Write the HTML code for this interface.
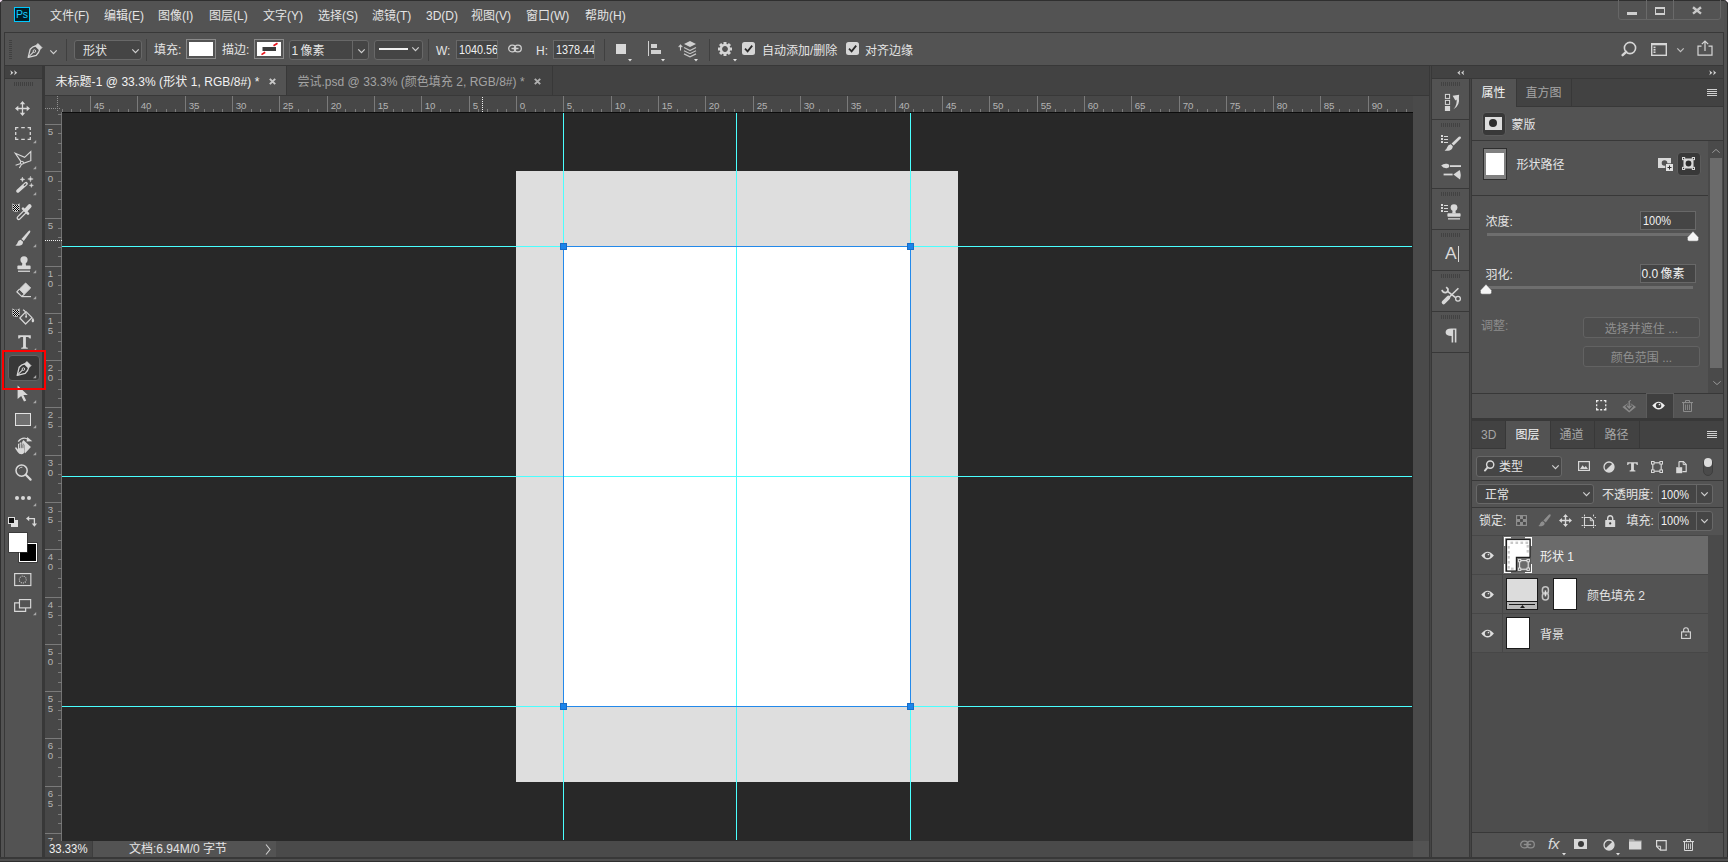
<!DOCTYPE html>
<html lang="zh-CN"><head><meta charset="utf-8"><title>Photoshop</title>
<style>
html,body{margin:0;padding:0;}
body{width:1728px;height:862px;overflow:hidden;background:#535353;position:relative;
 font-family:"Liberation Sans","Noto Sans CJK SC",sans-serif;font-size:12px;color:#e4e4e4;}
div,svg{position:absolute;box-sizing:border-box;}
svg{overflow:visible;display:block;}
.t{white-space:nowrap;}
</style></head><body>

<div style="left:0px;top:0px;width:1728px;height:1px;background:#2f2f2f;"></div>
<div style="left:0px;top:0px;width:1px;height:862px;background:#2f2f2f;"></div>
<div style="left:1723px;top:32px;width:1px;height:830px;background:#383838;"></div>
<div style="left:1724px;top:0px;width:3px;height:862px;background:#515151;"></div>
<div style="left:1727px;top:0px;width:1px;height:862px;background:#2f2f2f;"></div>
<div style="left:0px;top:857px;width:1728px;height:2px;background:#383838;"></div>
<div style="left:0px;top:859px;width:1728px;height:2px;background:#4f4f4f;"></div>
<div style="left:0px;top:861px;width:1728px;height:1px;background:#2f2f2f;"></div>
<div style="left:4px;top:32px;width:1px;height:826px;background:#383838;"></div>
<svg style="left:1723px;top:0px;" width="5" height="5" viewBox="0 0 5 5"><path d="M1 0 H5 V4 Z" fill="#2a2a2a"/><path d="M2.2 0 H5 V2.8 Z" fill="#fdf6fd"/></svg>
<svg style="left:0px;top:0px;" width="4" height="4" viewBox="0 0 4 4"><path d="M0 0 H2.6 L0 2.6 Z" fill="#f0dcf0"/></svg>
<div style="left:14px;top:7px;width:16px;height:15px;background:#001d26;border:1px solid #00c8ff;"></div>
<div class="t" style="left:14px;top:7px;width:16px;height:15px;line-height:15px;text-align:center;font-size:10.5px;font-weight:normal;color:#19cfff;letter-spacing:-0.2px;">Ps</div>
<div class="t" style="left:50px;top:7.5px;height:16px;line-height:16px;font-size:12px;color:#e4e4e4;">文件(F)</div>
<div class="t" style="left:104px;top:7.5px;height:16px;line-height:16px;font-size:12px;color:#e4e4e4;">编辑(E)</div>
<div class="t" style="left:158px;top:7.5px;height:16px;line-height:16px;font-size:12px;color:#e4e4e4;">图像(I)</div>
<div class="t" style="left:209px;top:7.5px;height:16px;line-height:16px;font-size:12px;color:#e4e4e4;">图层(L)</div>
<div class="t" style="left:263px;top:7.5px;height:16px;line-height:16px;font-size:12px;color:#e4e4e4;">文字(Y)</div>
<div class="t" style="left:318px;top:7.5px;height:16px;line-height:16px;font-size:12px;color:#e4e4e4;">选择(S)</div>
<div class="t" style="left:372px;top:7.5px;height:16px;line-height:16px;font-size:12px;color:#e4e4e4;">滤镜(T)</div>
<div class="t" style="left:426px;top:7.5px;height:16px;line-height:16px;font-size:12px;color:#e4e4e4;">3D(D)</div>
<div class="t" style="left:471px;top:7.5px;height:16px;line-height:16px;font-size:12px;color:#e4e4e4;">视图(V)</div>
<div class="t" style="left:526px;top:7.5px;height:16px;line-height:16px;font-size:12px;color:#e4e4e4;">窗口(W)</div>
<div class="t" style="left:585px;top:7.5px;height:16px;line-height:16px;font-size:12px;color:#e4e4e4;">帮助(H)</div>
<div style="left:1618px;top:-3px;width:103px;height:23px;border:1px solid #666;border-radius:3px;"></div>
<div style="left:1646px;top:0px;width:1px;height:19px;background:#6a6a6a;"></div>
<div style="left:1673px;top:0px;width:1px;height:19px;background:#6a6a6a;"></div>
<div style="left:1627px;top:12px;width:10px;height:3px;background:#cfcfcf;"></div>
<div style="left:1655px;top:7px;width:10px;height:8px;border:1.5px solid #cfcfcf;border-top-width:2px;border-bottom-width:2px;"></div>
<svg style="left:1692px;top:5.6px;" width="10" height="9" viewBox="0 0 10 9"><path d="M1 1.2 L9 7.6 M9 1.2 L1 7.6" stroke="#c8c8c8" stroke-width="2.4" fill="none"/></svg>
<div style="left:4px;top:32px;width:1720px;height:34px;background:#535353;border:1px solid #383838;"></div>
<div style="left:9px;top:40px;width:3px;height:1px;background:#404040;"></div>
<div style="left:9px;top:42px;width:3px;height:1px;background:#404040;"></div>
<div style="left:9px;top:44px;width:3px;height:1px;background:#404040;"></div>
<div style="left:9px;top:46px;width:3px;height:1px;background:#404040;"></div>
<div style="left:9px;top:48px;width:3px;height:1px;background:#404040;"></div>
<div style="left:9px;top:50px;width:3px;height:1px;background:#404040;"></div>
<div style="left:9px;top:52px;width:3px;height:1px;background:#404040;"></div>
<div style="left:9px;top:54px;width:3px;height:1px;background:#404040;"></div>
<div style="left:9px;top:56px;width:3px;height:1px;background:#404040;"></div>
<div style="left:9px;top:58px;width:3px;height:1px;background:#404040;"></div>
<svg style="left:27px;top:42px;" width="16" height="17" viewBox="0 0 16 17"><path d="M1.2 15.3 L3.2 7.2 Q5.5 4.6 8.6 3.9 L12.6 7.9 Q11.9 11 9.3 13.3 Z" fill="none" stroke="#d6d6d6" stroke-width="1.3" stroke-linejoin="round"/><path d="M8.6 3.9 L10.9 1.6 L14.9 5.6 L12.6 7.9 Z" fill="#d6d6d6" stroke="#d6d6d6" stroke-width="1"/><path d="M1.6 14.9 L6.6 9.9" stroke="#d6d6d6" stroke-width="1.1"/><circle cx="7.4" cy="9.1" r="1.3" fill="none" stroke="#d6d6d6" stroke-width="1"/></svg>
<svg style="left:50.0px;top:49.5px;" width="7" height="4" viewBox="0 0 7 4"><path d="M0.3 0.3 L3.5 3.6 L6.7 0.3" fill="none" stroke="#d0d0d0" stroke-width="1.2"/></svg>
<div style="left:66px;top:39px;width:1px;height:22px;background:#404040;"></div>
<div style="left:74px;top:40px;width:68px;height:20px;background:#454545;border:1px solid #686868;border-radius:3px;"></div>
<div class="t" style="left:83px;top:43px;height:16px;line-height:16px;font-size:12px;color:#e4e4e4;">形状</div>
<svg style="left:131.5px;top:48.5px;" width="7" height="4" viewBox="0 0 7 4"><path d="M0.3 0.3 L3.5 3.6 L6.7 0.3" fill="none" stroke="#d0d0d0" stroke-width="1.2"/></svg>
<div style="left:146px;top:39px;width:1px;height:22px;background:#404040;"></div>
<div class="t" style="left:154px;top:41.5px;height:16px;line-height:16px;font-size:12px;color:#e4e4e4;">填充:</div>
<div style="left:186px;top:39px;width:30px;height:20px;background:#ffffff;border:1px solid #8a8a8a;box-shadow:inset 0 0 0 2px #535353;"></div>
<div class="t" style="left:222px;top:41.5px;height:16px;line-height:16px;font-size:12px;color:#e4e4e4;">描边:</div>
<div style="left:254px;top:39px;width:30px;height:20px;background:#ffffff;border:1px solid #8a8a8a;box-shadow:inset 0 0 0 2px #535353;"></div>
<svg style="left:257px;top:42px;" width="24" height="14" viewBox="0 0 24 14"><rect x="5.5" y="5" width="13.5" height="4" fill="#3c3c3c"/><path d="M16.5 3.8 L20.5 1.2 M4.5 12.6 L8.2 10.2" stroke="#e8141c" stroke-width="1.7"/></svg>
<div style="left:289px;top:40px;width:80px;height:20px;background:#454545;border:1px solid #686868;border-radius:3px;"></div>
<div style="left:352px;top:41px;width:1px;height:18px;background:#686868;"></div>
<div class="t" style="left:291.5px;top:43px;height:16px;line-height:16px;font-size:12px;color:#e4e4e4;word-spacing:-1px;">1 像素</div>
<svg style="left:357.5px;top:48.5px;" width="7" height="4" viewBox="0 0 7 4"><path d="M0.3 0.3 L3.5 3.6 L6.7 0.3" fill="none" stroke="#d0d0d0" stroke-width="1.2"/></svg>
<div style="left:374px;top:40px;width:49px;height:20px;background:#454545;border:1px solid #686868;border-radius:3px;"></div>
<div style="left:379px;top:48px;width:29px;height:2px;background:#f0f0f0;"></div>
<svg style="left:411.5px;top:47.0px;" width="7" height="4" viewBox="0 0 7 4"><path d="M0.3 0.3 L3.5 3.6 L6.7 0.3" fill="none" stroke="#d0d0d0" stroke-width="1.2"/></svg>
<div style="left:428px;top:39px;width:1px;height:22px;background:#404040;"></div>
<div class="t" style="left:436px;top:42.6px;height:16px;line-height:16px;font-size:12px;color:#e4e4e4;">W:</div>
<div style="left:456px;top:40px;width:42px;height:19px;background:#454545;border:1px solid #686868;overflow:hidden;"><div class="t" style="left:1.8px;top:1px;line-height:16px;color:#f0f0f0;transform:scaleX(0.9);transform-origin:left center;">1040.56</div></div>
<svg style="left:508px;top:44px;" width="14" height="9" viewBox="0 0 14 9"><rect x="0.7" y="1.2" width="7" height="6.6" rx="3.3" fill="none" stroke="#cfcfcf" stroke-width="1.3"/><rect x="6.3" y="1.2" width="7" height="6.6" rx="3.3" fill="none" stroke="#cfcfcf" stroke-width="1.3"/><rect x="3.5" y="3.8" width="7" height="1.4" fill="#cfcfcf"/></svg>
<div class="t" style="left:536px;top:42.6px;height:16px;line-height:16px;font-size:12px;color:#e4e4e4;">H:</div>
<div style="left:553px;top:40px;width:42px;height:19px;background:#454545;border:1px solid #686868;overflow:hidden;"><div class="t" style="left:1.8px;top:1px;line-height:16px;color:#f0f0f0;transform:scaleX(0.9);transform-origin:left center;">1378.44</div></div>
<div style="left:604px;top:39px;width:1px;height:22px;background:#404040;"></div>
<div style="left:616px;top:44px;width:10px;height:10px;background:#d8d8d8;"></div>
<svg style="left:627.5px;top:59.3px;" width="4" height="2.5" viewBox="0 0 4 2.5"><path d="M0 0 H4 L2 2.5 Z" fill="#e0e0e0"/></svg>
<div style="left:648px;top:41px;width:1px;height:15px;background:#d0d0d0;"></div>
<div style="left:651px;top:44px;width:6px;height:4px;background:#d0d0d0;"></div>
<div style="left:651px;top:50px;width:10px;height:4px;background:#d0d0d0;"></div>
<svg style="left:660.5px;top:59.3px;" width="4" height="2.5" viewBox="0 0 4 2.5"><path d="M0 0 H4 L2 2.5 Z" fill="#e0e0e0"/></svg>
<svg style="left:679px;top:40px;" width="18" height="18" viewBox="0 0 18 18"><path d="M1.5 5.5 V10.5 M-0.3 7.2 L1.5 5 L3.3 7.2" stroke="#d0d0d0" stroke-width="1.1" fill="none"/><path d="M11 1 L17 4 L11 7 L5 4 Z" fill="#d0d0d0"/><path d="M5 7.5 L11 10.5 L17 7.5 M5 10.7 L11 13.7 L17 10.7 M5 13.9 L11 16.9 L17 13.9" stroke="#c4c4c4" stroke-width="1.2" fill="none"/></svg>
<svg style="left:693.5px;top:59.3px;" width="4" height="2.5" viewBox="0 0 4 2.5"><path d="M0 0 H4 L2 2.5 Z" fill="#e0e0e0"/></svg>
<div style="left:709px;top:39px;width:1px;height:22px;background:#404040;"></div>
<svg style="left:718px;top:42px;" width="14" height="14" viewBox="0 0 14 14"><g transform="translate(7,7)"><rect x="-1.5" y="-7" width="3" height="4" fill="#d4d4d4" transform="rotate(0)"/><rect x="-1.5" y="-7" width="3" height="4" fill="#d4d4d4" transform="rotate(45)"/><rect x="-1.5" y="-7" width="3" height="4" fill="#d4d4d4" transform="rotate(90)"/><rect x="-1.5" y="-7" width="3" height="4" fill="#d4d4d4" transform="rotate(135)"/><rect x="-1.5" y="-7" width="3" height="4" fill="#d4d4d4" transform="rotate(180)"/><rect x="-1.5" y="-7" width="3" height="4" fill="#d4d4d4" transform="rotate(225)"/><rect x="-1.5" y="-7" width="3" height="4" fill="#d4d4d4" transform="rotate(270)"/><rect x="-1.5" y="-7" width="3" height="4" fill="#d4d4d4" transform="rotate(315)"/><circle r="4.1" fill="none" stroke="#d4d4d4" stroke-width="2.4"/></g></svg>
<svg style="left:732.5px;top:59.3px;" width="4" height="2.5" viewBox="0 0 4 2.5"><path d="M0 0 H4 L2 2.5 Z" fill="#e0e0e0"/></svg>
<div style="left:742px;top:42px;width:13px;height:13px;background:#d6d6d6;border-radius:2.5px;"></div>
<svg style="left:742px;top:42px;" width="13" height="13" viewBox="0 0 13 13"><path d="M3 6.6 L5.6 9.3 L10.2 3.6" stroke="#2b2b2b" stroke-width="1.8" fill="none"/></svg>
<div style="left:846px;top:42px;width:13px;height:13px;background:#d6d6d6;border-radius:2.5px;"></div>
<svg style="left:846px;top:42px;" width="13" height="13" viewBox="0 0 13 13"><path d="M3 6.6 L5.6 9.3 L10.2 3.6" stroke="#2b2b2b" stroke-width="1.8" fill="none"/></svg>
<div class="t" style="left:762px;top:42.8px;height:16px;line-height:16px;font-size:12px;color:#e4e4e4;">自动添加/删除</div>
<div class="t" style="left:865px;top:42.8px;height:16px;line-height:16px;font-size:12px;color:#e4e4e4;">对齐边缘</div>
<svg style="left:1620px;top:40px;" width="18" height="18" viewBox="0 0 18 18"><circle cx="10" cy="8" r="5.6" fill="none" stroke="#d6d6d6" stroke-width="1.6"/><path d="M6.2 11.8 L2.6 15.2" stroke="#d6d6d6" stroke-width="2.4" stroke-linecap="round"/></svg>
<svg style="left:1651px;top:43px;" width="16" height="13" viewBox="0 0 16 13"><rect x="0.7" y="0.7" width="14.6" height="11.6" fill="none" stroke="#d6d6d6" stroke-width="1.4"/><rect x="0.7" y="0.7" width="14.6" height="1.6" fill="#d6d6d6"/><rect x="2.5" y="3.6" width="2" height="1.6" fill="#d6d6d6"/><rect x="2.5" y="6" width="2" height="1.6" fill="#d6d6d6"/><rect x="2.5" y="8.4" width="2" height="1.6" fill="#d6d6d6"/></svg>
<svg style="left:1676.5px;top:48.0px;" width="7" height="4" viewBox="0 0 7 4"><path d="M0.3 0.3 L3.5 3.6 L6.7 0.3" fill="none" stroke="#c0c0c0" stroke-width="1.2"/></svg>
<svg style="left:1697px;top:40px;" width="16" height="16" viewBox="0 0 16 16"><path d="M4.5 6.2 H1 V15.2 H15 V6.2 H11.5" fill="none" stroke="#d6d6d6" stroke-width="1.2"/><path d="M8 11 V1.2 M4.8 4.2 L8 1 L11.2 4.2" fill="none" stroke="#d6d6d6" stroke-width="1.2"/></svg>
<div style="left:42px;top:66px;width:3px;height:791px;background:#383838;"></div>
<div style="left:45px;top:66px;width:1384px;height:30px;background:#424242;"></div>
<div style="left:45px;top:95px;width:1384px;height:1px;background:#383838;"></div>
<div style="left:45px;top:66px;width:241px;height:29px;background:#535353;"></div>
<div style="left:286px;top:66px;width:1px;height:29px;background:#383838;"></div>
<div style="left:552px;top:66px;width:1px;height:29px;background:#383838;"></div>
<div class="t" id="tab1" style="letter-spacing:0.06px;left:55.4px;top:74px;height:17px;line-height:17px;color:#f2f2f2;">未标题-1 @ 33.3% (形状 1, RGB/8#) *</div>
<div class="t" id="tab2" style="letter-spacing:0.03px;left:297.4px;top:74px;height:17px;line-height:17px;color:#a4a4a4;">尝试.psd @ 33.3% (颜色填充 2, RGB/8#) *</div>
<svg style="left:268.5px;top:78px;" width="7" height="7" viewBox="0 0 7 7"><path d="M0.8 0.8 L6.2 6.2 M6.2 0.8 L0.8 6.2" stroke="#c8c8c8" stroke-width="1.9" fill="none"/></svg>
<svg style="left:534.0px;top:78px;" width="7" height="7" viewBox="0 0 7 7"><path d="M0.8 0.8 L6.2 6.2 M6.2 0.8 L0.8 6.2" stroke="#b0b0b0" stroke-width="1.9" fill="none"/></svg>
<svg style="left:45px;top:96px;font-size:9.7px;fill:#b4b4b4;font-family:'Liberation Sans',sans-serif;" width="1384" height="16" viewBox="0 0 1384 16"><rect x="0" y="0" width="1384" height="16" fill="#474747"/><path d="M0 12.5 H16 M12.5 0 V16" stroke="#909090" stroke-width="1" stroke-dasharray="1 1" fill="none"/><rect x="17" y="13" width="1" height="3" fill="#7a7a7a"/><rect x="26" y="13" width="1" height="3" fill="#7a7a7a"/><rect x="35" y="13" width="1" height="3" fill="#7a7a7a"/><rect x="45" y="0" width="1" height="16" fill="#7a7a7a"/><text x="48.7" y="12.6">45</text><rect x="54" y="13" width="1" height="3" fill="#7a7a7a"/><rect x="64" y="13" width="1" height="3" fill="#7a7a7a"/><rect x="73" y="13" width="1" height="3" fill="#7a7a7a"/><rect x="83" y="13" width="1" height="3" fill="#7a7a7a"/><rect x="92" y="0" width="1" height="16" fill="#7a7a7a"/><text x="95.7" y="12.6">40</text><rect x="102" y="13" width="1" height="3" fill="#7a7a7a"/><rect x="111" y="13" width="1" height="3" fill="#7a7a7a"/><rect x="121" y="13" width="1" height="3" fill="#7a7a7a"/><rect x="130" y="13" width="1" height="3" fill="#7a7a7a"/><rect x="140" y="0" width="1" height="16" fill="#7a7a7a"/><text x="143.7" y="12.6">35</text><rect x="149" y="13" width="1" height="3" fill="#7a7a7a"/><rect x="159" y="13" width="1" height="3" fill="#7a7a7a"/><rect x="168" y="13" width="1" height="3" fill="#7a7a7a"/><rect x="177" y="13" width="1" height="3" fill="#7a7a7a"/><rect x="187" y="0" width="1" height="16" fill="#7a7a7a"/><text x="190.7" y="12.6">30</text><rect x="196" y="13" width="1" height="3" fill="#7a7a7a"/><rect x="206" y="13" width="1" height="3" fill="#7a7a7a"/><rect x="215" y="13" width="1" height="3" fill="#7a7a7a"/><rect x="225" y="13" width="1" height="3" fill="#7a7a7a"/><rect x="234" y="0" width="1" height="16" fill="#7a7a7a"/><text x="237.7" y="12.6">25</text><rect x="244" y="13" width="1" height="3" fill="#7a7a7a"/><rect x="253" y="13" width="1" height="3" fill="#7a7a7a"/><rect x="263" y="13" width="1" height="3" fill="#7a7a7a"/><rect x="272" y="13" width="1" height="3" fill="#7a7a7a"/><rect x="282" y="0" width="1" height="16" fill="#7a7a7a"/><text x="285.7" y="12.6">20</text><rect x="291" y="13" width="1" height="3" fill="#7a7a7a"/><rect x="300" y="13" width="1" height="3" fill="#7a7a7a"/><rect x="310" y="13" width="1" height="3" fill="#7a7a7a"/><rect x="319" y="13" width="1" height="3" fill="#7a7a7a"/><rect x="329" y="0" width="1" height="16" fill="#7a7a7a"/><text x="332.7" y="12.6">15</text><rect x="338" y="13" width="1" height="3" fill="#7a7a7a"/><rect x="348" y="13" width="1" height="3" fill="#7a7a7a"/><rect x="357" y="13" width="1" height="3" fill="#7a7a7a"/><rect x="367" y="13" width="1" height="3" fill="#7a7a7a"/><rect x="376" y="0" width="1" height="16" fill="#7a7a7a"/><text x="379.7" y="12.6">10</text><rect x="386" y="13" width="1" height="3" fill="#7a7a7a"/><rect x="395" y="13" width="1" height="3" fill="#7a7a7a"/><rect x="405" y="13" width="1" height="3" fill="#7a7a7a"/><rect x="414" y="13" width="1" height="3" fill="#7a7a7a"/><rect x="424" y="0" width="1" height="16" fill="#7a7a7a"/><text x="427.7" y="12.6">5</text><rect x="433" y="13" width="1" height="3" fill="#7a7a7a"/><rect x="442" y="13" width="1" height="3" fill="#7a7a7a"/><rect x="452" y="13" width="1" height="3" fill="#7a7a7a"/><rect x="461" y="13" width="1" height="3" fill="#7a7a7a"/><rect x="471" y="0" width="1" height="16" fill="#7a7a7a"/><text x="474.7" y="12.6">0</text><rect x="480" y="13" width="1" height="3" fill="#7a7a7a"/><rect x="490" y="13" width="1" height="3" fill="#7a7a7a"/><rect x="499" y="13" width="1" height="3" fill="#7a7a7a"/><rect x="509" y="13" width="1" height="3" fill="#7a7a7a"/><rect x="518" y="0" width="1" height="16" fill="#7a7a7a"/><text x="521.7" y="12.6">5</text><rect x="528" y="13" width="1" height="3" fill="#7a7a7a"/><rect x="537" y="13" width="1" height="3" fill="#7a7a7a"/><rect x="547" y="13" width="1" height="3" fill="#7a7a7a"/><rect x="556" y="13" width="1" height="3" fill="#7a7a7a"/><rect x="566" y="0" width="1" height="16" fill="#7a7a7a"/><text x="569.7" y="12.6">10</text><rect x="575" y="13" width="1" height="3" fill="#7a7a7a"/><rect x="584" y="13" width="1" height="3" fill="#7a7a7a"/><rect x="594" y="13" width="1" height="3" fill="#7a7a7a"/><rect x="603" y="13" width="1" height="3" fill="#7a7a7a"/><rect x="613" y="0" width="1" height="16" fill="#7a7a7a"/><text x="616.7" y="12.6">15</text><rect x="622" y="13" width="1" height="3" fill="#7a7a7a"/><rect x="632" y="13" width="1" height="3" fill="#7a7a7a"/><rect x="641" y="13" width="1" height="3" fill="#7a7a7a"/><rect x="651" y="13" width="1" height="3" fill="#7a7a7a"/><rect x="660" y="0" width="1" height="16" fill="#7a7a7a"/><text x="663.7" y="12.6">20</text><rect x="670" y="13" width="1" height="3" fill="#7a7a7a"/><rect x="679" y="13" width="1" height="3" fill="#7a7a7a"/><rect x="689" y="13" width="1" height="3" fill="#7a7a7a"/><rect x="698" y="13" width="1" height="3" fill="#7a7a7a"/><rect x="708" y="0" width="1" height="16" fill="#7a7a7a"/><text x="711.7" y="12.6">25</text><rect x="717" y="13" width="1" height="3" fill="#7a7a7a"/><rect x="726" y="13" width="1" height="3" fill="#7a7a7a"/><rect x="736" y="13" width="1" height="3" fill="#7a7a7a"/><rect x="745" y="13" width="1" height="3" fill="#7a7a7a"/><rect x="755" y="0" width="1" height="16" fill="#7a7a7a"/><text x="758.7" y="12.6">30</text><rect x="764" y="13" width="1" height="3" fill="#7a7a7a"/><rect x="774" y="13" width="1" height="3" fill="#7a7a7a"/><rect x="783" y="13" width="1" height="3" fill="#7a7a7a"/><rect x="793" y="13" width="1" height="3" fill="#7a7a7a"/><rect x="802" y="0" width="1" height="16" fill="#7a7a7a"/><text x="805.7" y="12.6">35</text><rect x="812" y="13" width="1" height="3" fill="#7a7a7a"/><rect x="821" y="13" width="1" height="3" fill="#7a7a7a"/><rect x="831" y="13" width="1" height="3" fill="#7a7a7a"/><rect x="840" y="13" width="1" height="3" fill="#7a7a7a"/><rect x="850" y="0" width="1" height="16" fill="#7a7a7a"/><text x="853.7" y="12.6">40</text><rect x="859" y="13" width="1" height="3" fill="#7a7a7a"/><rect x="868" y="13" width="1" height="3" fill="#7a7a7a"/><rect x="878" y="13" width="1" height="3" fill="#7a7a7a"/><rect x="887" y="13" width="1" height="3" fill="#7a7a7a"/><rect x="897" y="0" width="1" height="16" fill="#7a7a7a"/><text x="900.7" y="12.6">45</text><rect x="906" y="13" width="1" height="3" fill="#7a7a7a"/><rect x="916" y="13" width="1" height="3" fill="#7a7a7a"/><rect x="925" y="13" width="1" height="3" fill="#7a7a7a"/><rect x="935" y="13" width="1" height="3" fill="#7a7a7a"/><rect x="944" y="0" width="1" height="16" fill="#7a7a7a"/><text x="947.7" y="12.6">50</text><rect x="954" y="13" width="1" height="3" fill="#7a7a7a"/><rect x="963" y="13" width="1" height="3" fill="#7a7a7a"/><rect x="973" y="13" width="1" height="3" fill="#7a7a7a"/><rect x="982" y="13" width="1" height="3" fill="#7a7a7a"/><rect x="992" y="0" width="1" height="16" fill="#7a7a7a"/><text x="995.7" y="12.6">55</text><rect x="1001" y="13" width="1" height="3" fill="#7a7a7a"/><rect x="1010" y="13" width="1" height="3" fill="#7a7a7a"/><rect x="1020" y="13" width="1" height="3" fill="#7a7a7a"/><rect x="1029" y="13" width="1" height="3" fill="#7a7a7a"/><rect x="1039" y="0" width="1" height="16" fill="#7a7a7a"/><text x="1042.7" y="12.6">60</text><rect x="1048" y="13" width="1" height="3" fill="#7a7a7a"/><rect x="1058" y="13" width="1" height="3" fill="#7a7a7a"/><rect x="1067" y="13" width="1" height="3" fill="#7a7a7a"/><rect x="1077" y="13" width="1" height="3" fill="#7a7a7a"/><rect x="1086" y="0" width="1" height="16" fill="#7a7a7a"/><text x="1089.7" y="12.6">65</text><rect x="1096" y="13" width="1" height="3" fill="#7a7a7a"/><rect x="1105" y="13" width="1" height="3" fill="#7a7a7a"/><rect x="1115" y="13" width="1" height="3" fill="#7a7a7a"/><rect x="1124" y="13" width="1" height="3" fill="#7a7a7a"/><rect x="1134" y="0" width="1" height="16" fill="#7a7a7a"/><text x="1137.7" y="12.6">70</text><rect x="1143" y="13" width="1" height="3" fill="#7a7a7a"/><rect x="1152" y="13" width="1" height="3" fill="#7a7a7a"/><rect x="1162" y="13" width="1" height="3" fill="#7a7a7a"/><rect x="1171" y="13" width="1" height="3" fill="#7a7a7a"/><rect x="1181" y="0" width="1" height="16" fill="#7a7a7a"/><text x="1184.7" y="12.6">75</text><rect x="1190" y="13" width="1" height="3" fill="#7a7a7a"/><rect x="1200" y="13" width="1" height="3" fill="#7a7a7a"/><rect x="1209" y="13" width="1" height="3" fill="#7a7a7a"/><rect x="1219" y="13" width="1" height="3" fill="#7a7a7a"/><rect x="1228" y="0" width="1" height="16" fill="#7a7a7a"/><text x="1231.7" y="12.6">80</text><rect x="1238" y="13" width="1" height="3" fill="#7a7a7a"/><rect x="1247" y="13" width="1" height="3" fill="#7a7a7a"/><rect x="1257" y="13" width="1" height="3" fill="#7a7a7a"/><rect x="1266" y="13" width="1" height="3" fill="#7a7a7a"/><rect x="1275" y="0" width="1" height="16" fill="#7a7a7a"/><text x="1278.7" y="12.6">85</text><rect x="1285" y="13" width="1" height="3" fill="#7a7a7a"/><rect x="1294" y="13" width="1" height="3" fill="#7a7a7a"/><rect x="1304" y="13" width="1" height="3" fill="#7a7a7a"/><rect x="1313" y="13" width="1" height="3" fill="#7a7a7a"/><rect x="1323" y="0" width="1" height="16" fill="#7a7a7a"/><text x="1326.7" y="12.6">90</text><rect x="1332" y="13" width="1" height="3" fill="#7a7a7a"/><rect x="1342" y="13" width="1" height="3" fill="#7a7a7a"/><rect x="1351" y="13" width="1" height="3" fill="#7a7a7a"/><rect x="1361" y="13" width="1" height="3" fill="#7a7a7a"/><path d="M437.5 1 V16" stroke="#f0f0f0" stroke-width="1" stroke-dasharray="1 1"/></svg>
<div style="left:1413px;top:96px;width:16px;height:16px;background:#4a4a4a;"></div>
<svg style="left:45px;top:112px;font-size:9.7px;fill:#b4b4b4;font-family:'Liberation Sans',sans-serif;overflow:hidden;" width="17" height="729" viewBox="0 0 17 729"><g clip-path="inset(0)"><rect x="0" y="0" width="17" height="729" fill="#474747"/><rect x="16" y="0" width="1" height="729" fill="#727272"/><rect x="13" y="2" width="4" height="1" fill="#7a7a7a"/><rect x="0" y="12" width="17" height="1" fill="#7a7a7a"/><text x="2.8" y="22.8">5</text><rect x="13" y="21" width="4" height="1" fill="#7a7a7a"/><rect x="13" y="31" width="4" height="1" fill="#7a7a7a"/><rect x="13" y="40" width="4" height="1" fill="#7a7a7a"/><rect x="13" y="50" width="4" height="1" fill="#7a7a7a"/><rect x="0" y="59" width="17" height="1" fill="#7a7a7a"/><text x="2.8" y="69.8">0</text><rect x="13" y="69" width="4" height="1" fill="#7a7a7a"/><rect x="13" y="78" width="4" height="1" fill="#7a7a7a"/><rect x="13" y="87" width="4" height="1" fill="#7a7a7a"/><rect x="13" y="97" width="4" height="1" fill="#7a7a7a"/><rect x="0" y="106" width="17" height="1" fill="#7a7a7a"/><text x="2.8" y="116.8">5</text><rect x="13" y="116" width="4" height="1" fill="#7a7a7a"/><rect x="13" y="125" width="4" height="1" fill="#7a7a7a"/><rect x="13" y="135" width="4" height="1" fill="#7a7a7a"/><rect x="13" y="144" width="4" height="1" fill="#7a7a7a"/><rect x="0" y="154" width="17" height="1" fill="#7a7a7a"/><text x="2.8" y="164.8">1</text><text x="2.8" y="175.20000000000002">0</text><rect x="13" y="163" width="4" height="1" fill="#7a7a7a"/><rect x="13" y="173" width="4" height="1" fill="#7a7a7a"/><rect x="13" y="182" width="4" height="1" fill="#7a7a7a"/><rect x="13" y="191" width="4" height="1" fill="#7a7a7a"/><rect x="0" y="201" width="17" height="1" fill="#7a7a7a"/><text x="2.8" y="211.8">1</text><text x="2.8" y="222.20000000000002">5</text><rect x="13" y="210" width="4" height="1" fill="#7a7a7a"/><rect x="13" y="220" width="4" height="1" fill="#7a7a7a"/><rect x="13" y="229" width="4" height="1" fill="#7a7a7a"/><rect x="13" y="239" width="4" height="1" fill="#7a7a7a"/><rect x="0" y="248" width="17" height="1" fill="#7a7a7a"/><text x="2.8" y="258.8">2</text><text x="2.8" y="269.2">0</text><rect x="13" y="258" width="4" height="1" fill="#7a7a7a"/><rect x="13" y="267" width="4" height="1" fill="#7a7a7a"/><rect x="13" y="277" width="4" height="1" fill="#7a7a7a"/><rect x="13" y="286" width="4" height="1" fill="#7a7a7a"/><rect x="0" y="295" width="17" height="1" fill="#7a7a7a"/><text x="2.8" y="305.8">2</text><text x="2.8" y="316.2">5</text><rect x="13" y="305" width="4" height="1" fill="#7a7a7a"/><rect x="13" y="314" width="4" height="1" fill="#7a7a7a"/><rect x="13" y="324" width="4" height="1" fill="#7a7a7a"/><rect x="13" y="333" width="4" height="1" fill="#7a7a7a"/><rect x="0" y="343" width="17" height="1" fill="#7a7a7a"/><text x="2.8" y="353.8">3</text><text x="2.8" y="364.2">0</text><rect x="13" y="352" width="4" height="1" fill="#7a7a7a"/><rect x="13" y="362" width="4" height="1" fill="#7a7a7a"/><rect x="13" y="371" width="4" height="1" fill="#7a7a7a"/><rect x="13" y="381" width="4" height="1" fill="#7a7a7a"/><rect x="0" y="390" width="17" height="1" fill="#7a7a7a"/><text x="2.8" y="400.8">3</text><text x="2.8" y="411.2">5</text><rect x="13" y="399" width="4" height="1" fill="#7a7a7a"/><rect x="13" y="409" width="4" height="1" fill="#7a7a7a"/><rect x="13" y="418" width="4" height="1" fill="#7a7a7a"/><rect x="13" y="428" width="4" height="1" fill="#7a7a7a"/><rect x="0" y="437" width="17" height="1" fill="#7a7a7a"/><text x="2.8" y="447.8">4</text><text x="2.8" y="458.2">0</text><rect x="13" y="447" width="4" height="1" fill="#7a7a7a"/><rect x="13" y="456" width="4" height="1" fill="#7a7a7a"/><rect x="13" y="466" width="4" height="1" fill="#7a7a7a"/><rect x="13" y="475" width="4" height="1" fill="#7a7a7a"/><rect x="0" y="485" width="17" height="1" fill="#7a7a7a"/><text x="2.8" y="495.8">4</text><text x="2.8" y="506.2">5</text><rect x="13" y="494" width="4" height="1" fill="#7a7a7a"/><rect x="13" y="503" width="4" height="1" fill="#7a7a7a"/><rect x="13" y="513" width="4" height="1" fill="#7a7a7a"/><rect x="13" y="522" width="4" height="1" fill="#7a7a7a"/><rect x="0" y="532" width="17" height="1" fill="#7a7a7a"/><text x="2.8" y="542.8">5</text><text x="2.8" y="553.1999999999999">0</text><rect x="13" y="541" width="4" height="1" fill="#7a7a7a"/><rect x="13" y="551" width="4" height="1" fill="#7a7a7a"/><rect x="13" y="560" width="4" height="1" fill="#7a7a7a"/><rect x="13" y="570" width="4" height="1" fill="#7a7a7a"/><rect x="0" y="579" width="17" height="1" fill="#7a7a7a"/><text x="2.8" y="589.8">5</text><text x="2.8" y="600.1999999999999">5</text><rect x="13" y="589" width="4" height="1" fill="#7a7a7a"/><rect x="13" y="598" width="4" height="1" fill="#7a7a7a"/><rect x="13" y="607" width="4" height="1" fill="#7a7a7a"/><rect x="13" y="617" width="4" height="1" fill="#7a7a7a"/><rect x="0" y="626" width="17" height="1" fill="#7a7a7a"/><text x="2.8" y="636.8">6</text><text x="2.8" y="647.1999999999999">0</text><rect x="13" y="636" width="4" height="1" fill="#7a7a7a"/><rect x="13" y="645" width="4" height="1" fill="#7a7a7a"/><rect x="13" y="655" width="4" height="1" fill="#7a7a7a"/><rect x="13" y="664" width="4" height="1" fill="#7a7a7a"/><rect x="0" y="674" width="17" height="1" fill="#7a7a7a"/><text x="2.8" y="684.8">6</text><text x="2.8" y="695.1999999999999">5</text><rect x="13" y="683" width="4" height="1" fill="#7a7a7a"/><rect x="13" y="693" width="4" height="1" fill="#7a7a7a"/><rect x="13" y="702" width="4" height="1" fill="#7a7a7a"/><rect x="13" y="711" width="4" height="1" fill="#7a7a7a"/><rect x="0" y="721" width="17" height="1" fill="#7a7a7a"/><text x="2.8" y="731.8">7</text><text x="2.8" y="742.1999999999999">0</text><path d="M0 128.5 H17" stroke="#f0f0f0" stroke-width="1" stroke-dasharray="1 1"/></g></svg>
<div style="left:62px;top:112px;width:1351px;height:729px;background:#282828;"></div>
<div style="left:62px;top:112px;width:1351px;height:1px;background:#0c0c0c;"></div>
<div style="left:1413px;top:112px;width:16px;height:729px;background:#4a4a4a;"></div>
<div style="left:45px;top:841px;width:1368px;height:16px;background:#4a4a4a;"></div>
<div style="left:1413px;top:841px;width:16px;height:16px;background:#535353;"></div>
<div style="left:516px;top:171px;width:442px;height:611px;background:#dedede;"></div>
<div style="left:564px;top:247px;width:347px;height:460px;background:#ffffff;"></div>
<div style="left:563px;top:113px;width:1px;height:727px;background:#4affff;"></div>
<div style="left:736px;top:113px;width:1px;height:727px;background:#4affff;"></div>
<div style="left:910px;top:113px;width:1px;height:727px;background:#4affff;"></div>
<div style="left:62px;top:246px;width:1350px;height:1px;background:#4affff;"></div>
<div style="left:62px;top:476px;width:1350px;height:1px;background:#4affff;"></div>
<div style="left:62px;top:706px;width:1350px;height:1px;background:#4affff;"></div>
<div style="left:563px;top:246px;width:348px;height:461px;border:1px solid #2389ea;"></div>
<div style="left:560px;top:243px;width:7px;height:7px;background:#1b84ea;border:1px solid #1a6cc6;"></div>
<div style="left:560px;top:703px;width:7px;height:7px;background:#1b84ea;border:1px solid #1a6cc6;"></div>
<div style="left:907px;top:243px;width:7px;height:7px;background:#1b84ea;border:1px solid #1a6cc6;"></div>
<div style="left:907px;top:703px;width:7px;height:7px;background:#1b84ea;border:1px solid #1a6cc6;"></div>
<div style="left:45px;top:841px;width:48px;height:16px;background:#464646;border-right:1px solid #3e3e3e;"></div>
<div class="t" style="left:49px;top:841px;height:16px;line-height:16px;font-size:12px;color:#f0f0f0;transform:scaleX(0.946);transform-origin:left center;">33.33%</div>
<div style="left:93px;top:841px;width:183px;height:16px;background:#535353;"></div>
<div class="t" style="left:129px;top:841px;height:16px;line-height:16px;font-size:12px;color:#e4e4e4;">文档:6.94M/0 字节</div>
<svg style="left:265px;top:844px;" width="6" height="11" viewBox="0 0 6 11"><path d="M1 0.5 L5 5.5 L1 10.5" fill="none" stroke="#d0d0d0" stroke-width="1.1"/></svg>
<div style="left:5px;top:66px;width:37px;height:791px;background:#535353;"></div>
<div style="left:5px;top:66px;width:37px;height:12px;background:#424242;"></div>
<div style="left:5px;top:78px;width:37px;height:1px;background:#383838;"></div>
<svg style="left:9.5px;top:70px;" width="8" height="6" viewBox="0 0 8 6"><path d="M0.3 0.3 L3.4 2.8 L0.3 5.3 L1.1 2.8 Z M4.1 0.3 L7.2 2.8 L4.1 5.3 L4.9 2.8 Z" fill="#d0d0d0"/></svg>
<div style="left:14px;top:82px;width:1px;height:4px;background:#404040;"></div>
<div style="left:16px;top:82px;width:1px;height:4px;background:#404040;"></div>
<div style="left:18px;top:82px;width:1px;height:4px;background:#404040;"></div>
<div style="left:20px;top:82px;width:1px;height:4px;background:#404040;"></div>
<div style="left:22px;top:82px;width:1px;height:4px;background:#404040;"></div>
<div style="left:24px;top:82px;width:1px;height:4px;background:#404040;"></div>
<div style="left:26px;top:82px;width:1px;height:4px;background:#404040;"></div>
<div style="left:28px;top:82px;width:1px;height:4px;background:#404040;"></div>
<div style="left:30px;top:82px;width:1px;height:4px;background:#404040;"></div>
<div style="left:32px;top:82px;width:1px;height:4px;background:#404040;"></div>
<svg style="left:15px;top:101px;" width="15" height="15" viewBox="0 0 15 15"><path d="M7.5 0 L10.2 3.3 H8.15 V6.85 H11.7 V4.8 L15 7.5 L11.7 10.2 V8.15 H8.15 V11.7 H10.2 L7.5 15 L4.8 11.7 H6.85 V8.15 H3.3 V10.2 L0 7.5 L3.3 4.8 V6.85 H6.85 V3.3 H4.8 Z" fill="#d8d8d8"/></svg>
<svg style="left:15px;top:127px;" width="16" height="13" viewBox="0 0 16 13"><path d="M0.7 3 V0.7 H3.4 M6.2 0.7 H9.8 M12.6 0.7 H15.3 V3 M15.3 5 V8 M15.3 10 V12.3 H12.6 M9.8 12.3 H6.2 M3.4 12.3 H0.7 V10 M0.7 8 V5" fill="none" stroke="#d8d8d8" stroke-width="1.3"/></svg>
<svg style="left:33px;top:139.8px;" width="3.2" height="3.2" viewBox="0 0 3.2 3.2"><path d="M3.2 0 V3.2 H0 Z" fill="#a8a8a8"/></svg>
<svg style="left:15px;top:151px;" width="17" height="18" viewBox="0 0 17 18"><path d="M6 10.6 L0.3 2.3 L9.6 6.3 L15.8 0.6 V9.7 L8.2 12.4" fill="none" stroke="#d8d8d8" stroke-width="1.15" stroke-linejoin="miter"/><circle cx="6.9" cy="11.7" r="1.5" fill="none" stroke="#d8d8d8" stroke-width="1.1"/><path d="M5.7 12.5 L0.6 14.2 M6.6 13.2 L4.4 17" stroke="#d8d8d8" stroke-width="1.15" fill="none"/></svg>
<svg style="left:33px;top:165.8px;" width="3.2" height="3.2" viewBox="0 0 3.2 3.2"><path d="M3.2 0 V3.2 H0 Z" fill="#a8a8a8"/></svg>
<svg style="left:15px;top:177px;" width="18" height="18" viewBox="0 0 18 18"><path d="M2.9 14 L11.1 6.6" stroke="#d8d8d8" stroke-width="3.5" stroke-linecap="round" fill="none"/><path d="M9.3 8.3 L10.7 7" stroke="#535353" stroke-width="1.3" stroke-linecap="round" fill="none"/><path d="M7.4 0.10000000000000009 Q7.4 2.4 9.7 2.4 Q7.4 2.4 7.4 4.699999999999999 Q7.4 2.4 5.1000000000000005 2.4 Q7.4 2.4 7.4 0.10000000000000009 Z M15.5 -0.7000000000000002 Q15.5 2 18.2 2 Q15.5 2 15.5 4.7 Q15.5 2 12.8 2 Q15.5 2 15.5 -0.7000000000000002 Z M16.4 6.4 Q16.4 8.4 18.4 8.4 Q16.4 8.4 16.4 10.4 Q16.4 8.4 14.399999999999999 8.4 Q16.4 8.4 16.4 6.4 Z" fill="#d8d8d8" stroke="#d8d8d8" stroke-width="0.5"/></svg>
<svg style="left:33px;top:191.8px;" width="3.2" height="3.2" viewBox="0 0 3.2 3.2"><path d="M3.2 0 V3.2 H0 Z" fill="#a8a8a8"/></svg>
<svg style="left:12px;top:203px;" width="8" height="9" viewBox="0 0 8 9"><path d="M0.5 0.2 L2.2 1.8 H5.8 L7.5 0.2 V6 Q7.5 8.8 4 8.8 Q0.5 8.8 0.5 6 Z" fill="#e0e0e0"/><rect x="1" y="2" width="1" height="1" fill="#000"/><rect x="3" y="2" width="1" height="1" fill="#000"/><rect x="5" y="2" width="1" height="1" fill="#000"/><rect x="2" y="3" width="1" height="1" fill="#000"/><rect x="4" y="3" width="1" height="1" fill="#000"/><rect x="6" y="3" width="1" height="1" fill="#000"/><rect x="1" y="4" width="1" height="1" fill="#000"/><rect x="3" y="4" width="1" height="1" fill="#000"/><rect x="5" y="4" width="1" height="1" fill="#000"/><rect x="2" y="5" width="1" height="1" fill="#000"/><rect x="4" y="5" width="1" height="1" fill="#000"/><rect x="6" y="5" width="1" height="1" fill="#000"/><rect x="1" y="6" width="1" height="1" fill="#000"/><rect x="3" y="6" width="1" height="1" fill="#000"/><rect x="5" y="6" width="1" height="1" fill="#000"/><rect x="2" y="7" width="1" height="1" fill="#000"/><rect x="4" y="7" width="1" height="1" fill="#000"/><rect x="6" y="7" width="1" height="1" fill="#000"/></svg>
<svg style="left:16px;top:203px;" width="17" height="18" viewBox="0 0 17 18"><path d="M1.6 16 Q0.6 15 1.6 13.8 L8.4 7 L10.6 9.2 L3.8 16 Q2.6 17 1.6 16 Z" fill="none" stroke="#d8d8d8" stroke-width="1.2"/><path d="M7 5.6 L12 10.6" stroke="#d8d8d8" stroke-width="2.6" stroke-linecap="round" fill="none"/><path d="M10.2 6.8 L13.6 3.2" stroke="#d8d8d8" stroke-width="4" stroke-linecap="round" fill="none"/></svg>
<svg style="left:15px;top:230px;" width="16" height="17" viewBox="0 0 16 17"><path d="M15 0.6 Q15.8 1.2 15 2.4 L8.8 11 L6.4 9 L13.6 1 Q14.4 0.2 15 0.6 Z" fill="#d8d8d8"/><path d="M5.6 9.8 L8 11.8 Q8.2 14.8 5.2 15.6 Q2.6 16.2 0.4 15.4 Q2.4 14.4 2.6 12.6 Q3 10.2 5.6 9.8 Z" fill="#d8d8d8"/></svg>
<svg style="left:33px;top:243.8px;" width="3.2" height="3.2" viewBox="0 0 3.2 3.2"><path d="M3.2 0 V3.2 H0 Z" fill="#a8a8a8"/></svg>
<svg style="left:17px;top:256px;" width="14" height="17" viewBox="0 0 14 17"><circle cx="7" cy="3.8" r="3.6" fill="#d8d8d8"/><path d="M5.4 6 H8.6 L9 10 H5 Z" fill="#d8d8d8"/><rect x="0.4" y="9.6" width="13.2" height="3.6" rx="0.8" fill="#d8d8d8"/><rect x="1" y="14.6" width="12" height="1.3" fill="#d8d8d8"/></svg>
<svg style="left:33px;top:269.8px;" width="3.2" height="3.2" viewBox="0 0 3.2 3.2"><path d="M3.2 0 V3.2 H0 Z" fill="#a8a8a8"/></svg>
<svg style="left:16px;top:282px;" width="16" height="17" viewBox="0 0 16 17"><path d="M9.6 1 L14.6 6 L8.4 12.2 L3.4 7.2 Z" fill="#d8d8d8" stroke="#d8d8d8" stroke-width="1" stroke-linejoin="round"/><path d="M3.4 7.2 L0.8 9.8 L5.6 14.4 L8.4 12.2" fill="none" stroke="#d8d8d8" stroke-width="1.2" stroke-linejoin="round"/><path d="M5.6 14.6 H15" stroke="#d8d8d8" stroke-width="1.2"/></svg>
<svg style="left:33px;top:295.8px;" width="3.2" height="3.2" viewBox="0 0 3.2 3.2"><path d="M3.2 0 V3.2 H0 Z" fill="#a8a8a8"/></svg>
<svg style="left:12px;top:308px;" width="8" height="9" viewBox="0 0 8 9"><path d="M0.5 0.2 L2.2 1.8 H5.8 L7.5 0.2 V6 Q7.5 8.8 4 8.8 Q0.5 8.8 0.5 6 Z" fill="#e0e0e0"/><rect x="1" y="2" width="1" height="1" fill="#000"/><rect x="3" y="2" width="1" height="1" fill="#000"/><rect x="5" y="2" width="1" height="1" fill="#000"/><rect x="2" y="3" width="1" height="1" fill="#000"/><rect x="4" y="3" width="1" height="1" fill="#000"/><rect x="6" y="3" width="1" height="1" fill="#000"/><rect x="1" y="4" width="1" height="1" fill="#000"/><rect x="3" y="4" width="1" height="1" fill="#000"/><rect x="5" y="4" width="1" height="1" fill="#000"/><rect x="2" y="5" width="1" height="1" fill="#000"/><rect x="4" y="5" width="1" height="1" fill="#000"/><rect x="6" y="5" width="1" height="1" fill="#000"/><rect x="1" y="6" width="1" height="1" fill="#000"/><rect x="3" y="6" width="1" height="1" fill="#000"/><rect x="5" y="6" width="1" height="1" fill="#000"/><rect x="2" y="7" width="1" height="1" fill="#000"/><rect x="4" y="7" width="1" height="1" fill="#000"/><rect x="6" y="7" width="1" height="1" fill="#000"/></svg>
<svg style="left:19px;top:309px;" width="16" height="17" viewBox="0 0 16 17"><path d="M0.8 9 L7 2.6 L13 8.6 L6.6 15 Z" fill="none" stroke="#d8d8d8" stroke-width="1.2" stroke-linejoin="round"/><path d="M4 0.8 Q7.5 2.4 7.2 7.4" fill="none" stroke="#d8d8d8" stroke-width="1.1"/><circle cx="7.1" cy="7.8" r="1" fill="#d8d8d8"/><path d="M13.8 8.6 Q15.8 11.6 14.8 12.8 Q13.8 13.8 12.8 12.8 Q12 11.6 13.8 8.6 Z" fill="#d8d8d8"/></svg>
<svg style="left:18px;top:335px;" width="13" height="14" viewBox="0 0 13 14"><path d="M0.2 0.3 H12.8 V3.6 H11.6 Q11.4 1.9 9.6 1.9 H7.9 V11.4 Q7.9 12.6 9.8 12.7 V13.7 H3.2 V12.7 Q5.1 12.6 5.1 11.4 V1.9 H3.4 Q1.6 1.9 1.4 3.6 H0.2 Z" fill="#d8d8d8"/></svg>
<svg style="left:33px;top:347.8px;" width="3.2" height="3.2" viewBox="0 0 3.2 3.2"><path d="M3.2 0 V3.2 H0 Z" fill="#a8a8a8"/></svg>
<div style="left:7.5px;top:355px;width:32px;height:26px;background:#383838;border-radius:4px;border:1px solid #626262;"></div>
<svg style="left:15.5px;top:360px;" width="16" height="17" viewBox="0 0 16 17"><path d="M1.2 15.3 L3.2 7.2 Q5.5 4.6 8.6 3.9 L12.6 7.9 Q11.9 11 9.3 13.3 Z" fill="none" stroke="#d6d6d6" stroke-width="1.3" stroke-linejoin="round"/><path d="M8.6 3.9 L10.9 1.6 L14.9 5.6 L12.6 7.9 Z" fill="#d6d6d6" stroke="#d6d6d6" stroke-width="1"/><path d="M1.6 14.9 L6.6 9.9" stroke="#d6d6d6" stroke-width="1.1"/><circle cx="7.4" cy="9.1" r="1.3" fill="none" stroke="#d6d6d6" stroke-width="1"/></svg>
<svg style="left:33px;top:374.8px;" width="3.2" height="3.2" viewBox="0 0 3.2 3.2"><path d="M3.2 0 V3.2 H0 Z" fill="#a8a8a8"/></svg>
<svg style="left:17px;top:385px;" width="12" height="17" viewBox="0 0 12 17"><path d="M0.6 0.4 L10.8 10 H6.4 L9.2 15.6 L7 16.6 L4.2 11 L0.6 14 Z" fill="#d8d8d8"/></svg>
<svg style="left:33px;top:399.8px;" width="3.2" height="3.2" viewBox="0 0 3.2 3.2"><path d="M3.2 0 V3.2 H0 Z" fill="#a8a8a8"/></svg>
<div style="left:2px;top:350px;width:44px;height:40px;border:2.2px solid #ff0000;"></div>
<div style="left:15px;top:412.6px;width:16.2px;height:13.4px;background:#707070;border:1.3px solid #e2e2e2;"></div>
<svg style="left:33px;top:424.8px;" width="3.2" height="3.2" viewBox="0 0 3.2 3.2"><path d="M3.2 0 V3.2 H0 Z" fill="#a8a8a8"/></svg>
<svg style="left:15px;top:437px;" width="18" height="18" viewBox="0 0 18 18"><path d="M3.2 4.6 Q7.6 -1 13.6 2.6" fill="none" stroke="#d8d8d8" stroke-width="1.3"/><path d="M12.2 0 L17.3 4.3 L11.6 4.5 Z" fill="#d8d8d8"/><path d="M8.4 3 L15.9 9.9 L10.2 16.2 L4 9.6 Z" fill="#d8d8d8"/><path d="M3 12.6 V7.2 Q3.7 5.8 4.4 7.2 V10.6 H4.7 V6 Q5.4 4.6 6.1 6 V10.6 H6.4 V6.6 Q7.1 5.2 7.8 6.6 V10.8 H8.1 V8.2 Q8.8 6.9 9.5 8.2 V13.4 Q9.5 17.2 6.4 17.2 Q4 17.2 2.6 15 L0.1 11.2 Q0.3 9.7 1.5 10.4 Z" fill="#d8d8d8" stroke="#535353" stroke-width="0.8" paint-order="stroke"/><path d="M4.55 7.4 V11.2 M6.25 6.6 V11.2 M7.95 7.6 V11.2" stroke="#535353" stroke-width="0.7"/></svg>
<svg style="left:33px;top:451.8px;" width="3.2" height="3.2" viewBox="0 0 3.2 3.2"><path d="M3.2 0 V3.2 H0 Z" fill="#a8a8a8"/></svg>
<svg style="left:15px;top:464px;" width="17" height="17" viewBox="0 0 17 17"><circle cx="6.6" cy="6.6" r="5.6" fill="none" stroke="#d8d8d8" stroke-width="1.5"/><path d="M4.2 4.6 Q5.4 3 7.4 3.2" fill="none" stroke="#d8d8d8" stroke-width="0.9"/><path d="M10.8 10.8 L15.6 15.6" stroke="#d8d8d8" stroke-width="2.2" stroke-linecap="round"/></svg>
<div style="left:15.0px;top:496px;width:4px;height:4px;background:#d8d8d8;border-radius:2px;"></div>
<div style="left:21.2px;top:496px;width:4px;height:4px;background:#d8d8d8;border-radius:2px;"></div>
<div style="left:27.4px;top:496px;width:4px;height:4px;background:#d8d8d8;border-radius:2px;"></div>
<svg style="left:33px;top:502.8px;" width="3.2" height="3.2" viewBox="0 0 3.2 3.2"><path d="M3.2 0 V3.2 H0 Z" fill="#a8a8a8"/></svg>
<div style="left:11px;top:520px;width:7px;height:7px;background:#e0e0e0;"></div>
<div style="left:8px;top:517px;width:7px;height:7px;background:#101010;border:1px solid #e0e0e0;"></div>
<svg style="left:26px;top:516px;" width="11" height="11" viewBox="0 0 11 11"><path d="M3 2.6 H8.4 V8" fill="none" stroke="#d8d8d8" stroke-width="1.3"/><path d="M0 2.6 L3.2 0 V5.2 Z" fill="#d8d8d8"/><path d="M8.4 10.8 L5.8 7.6 H11 Z" fill="#d8d8d8"/></svg>
<div style="left:18.5px;top:543px;width:18.6px;height:18.6px;background:#000000;border:1px solid #ffffff;box-shadow:0 0 0 0.7px #333;"></div>
<div style="left:8.5px;top:533px;width:18.6px;height:18.6px;background:#ffffff;box-shadow:0 0 0 0.7px #333;"></div>
<svg style="left:14px;top:573px;" width="17.5" height="13.5" viewBox="0 0 18 14"><rect x="0.6" y="0.6" width="16.8" height="12.4" fill="none" stroke="#d8d8d8" stroke-width="1.2"/><circle cx="9" cy="6.8" r="3.6" fill="none" stroke="#d8d8d8" stroke-width="1.1" stroke-dasharray="1 1.2"/></svg>
<svg style="left:14px;top:599px;" width="17.5" height="13.5" viewBox="0 0 18 14"><rect x="5.6" y="0.6" width="11.6" height="8.6" fill="#535353" stroke="#d8d8d8" stroke-width="1.2"/><path d="M5.6 4 H0.6 V12.8 H12 V9.4" fill="none" stroke="#d8d8d8" stroke-width="1.2"/></svg>
<svg style="left:33px;top:611.8px;" width="3.2" height="3.2" viewBox="0 0 3.2 3.2"><path d="M3.2 0 V3.2 H0 Z" fill="#a8a8a8"/></svg>
<div style="left:1429px;top:66px;width:3px;height:791px;background:#383838;"></div>
<div style="left:1430px;top:66px;width:1px;height:791px;background:#454545;"></div>
<div style="left:1469px;top:78px;width:3px;height:779px;background:#383838;"></div>
<div style="left:1470px;top:78px;width:1px;height:779px;background:#454545;"></div>
<div style="left:1432px;top:66px;width:291px;height:12px;background:#424242;"></div>
<div style="left:1432px;top:78px;width:291px;height:1px;background:#383838;"></div>
<svg style="left:1456.5px;top:70px;" width="8" height="6" viewBox="0 0 8 6"><path d="M3.4 0.3 L0.3 2.8 L3.4 5.3 L2.6 2.8 Z M7.2 0.3 L4.1 2.8 L7.2 5.3 L6.4 2.8 Z" fill="#d0d0d0"/></svg>
<svg style="left:1709.3px;top:70px;" width="8" height="6" viewBox="0 0 8 6"><path d="M0.3 0.3 L3.4 2.8 L0.3 5.3 L1.1 2.8 Z M4.1 0.3 L7.2 2.8 L4.1 5.3 L4.9 2.8 Z" fill="#d0d0d0"/></svg>
<div style="left:1432px;top:79px;width:37px;height:778px;background:#535353;"></div>
<div style="left:1432px;top:119px;width:37px;height:1px;background:#383838;"></div>
<div style="left:1441px;top:82px;width:1px;height:4px;background:#424242;"></div>
<div style="left:1443px;top:82px;width:1px;height:4px;background:#424242;"></div>
<div style="left:1445px;top:82px;width:1px;height:4px;background:#424242;"></div>
<div style="left:1447px;top:82px;width:1px;height:4px;background:#424242;"></div>
<div style="left:1449px;top:82px;width:1px;height:4px;background:#424242;"></div>
<div style="left:1451px;top:82px;width:1px;height:4px;background:#424242;"></div>
<div style="left:1453px;top:82px;width:1px;height:4px;background:#424242;"></div>
<div style="left:1455px;top:82px;width:1px;height:4px;background:#424242;"></div>
<div style="left:1457px;top:82px;width:1px;height:4px;background:#424242;"></div>
<div style="left:1459px;top:82px;width:1px;height:4px;background:#424242;"></div>
<div style="left:1432px;top:188px;width:37px;height:1px;background:#383838;"></div>
<div style="left:1441px;top:123px;width:1px;height:4px;background:#424242;"></div>
<div style="left:1443px;top:123px;width:1px;height:4px;background:#424242;"></div>
<div style="left:1445px;top:123px;width:1px;height:4px;background:#424242;"></div>
<div style="left:1447px;top:123px;width:1px;height:4px;background:#424242;"></div>
<div style="left:1449px;top:123px;width:1px;height:4px;background:#424242;"></div>
<div style="left:1451px;top:123px;width:1px;height:4px;background:#424242;"></div>
<div style="left:1453px;top:123px;width:1px;height:4px;background:#424242;"></div>
<div style="left:1455px;top:123px;width:1px;height:4px;background:#424242;"></div>
<div style="left:1457px;top:123px;width:1px;height:4px;background:#424242;"></div>
<div style="left:1459px;top:123px;width:1px;height:4px;background:#424242;"></div>
<div style="left:1432px;top:229px;width:37px;height:1px;background:#383838;"></div>
<div style="left:1441px;top:192px;width:1px;height:4px;background:#424242;"></div>
<div style="left:1443px;top:192px;width:1px;height:4px;background:#424242;"></div>
<div style="left:1445px;top:192px;width:1px;height:4px;background:#424242;"></div>
<div style="left:1447px;top:192px;width:1px;height:4px;background:#424242;"></div>
<div style="left:1449px;top:192px;width:1px;height:4px;background:#424242;"></div>
<div style="left:1451px;top:192px;width:1px;height:4px;background:#424242;"></div>
<div style="left:1453px;top:192px;width:1px;height:4px;background:#424242;"></div>
<div style="left:1455px;top:192px;width:1px;height:4px;background:#424242;"></div>
<div style="left:1457px;top:192px;width:1px;height:4px;background:#424242;"></div>
<div style="left:1459px;top:192px;width:1px;height:4px;background:#424242;"></div>
<div style="left:1432px;top:270px;width:37px;height:1px;background:#383838;"></div>
<div style="left:1441px;top:233px;width:1px;height:4px;background:#424242;"></div>
<div style="left:1443px;top:233px;width:1px;height:4px;background:#424242;"></div>
<div style="left:1445px;top:233px;width:1px;height:4px;background:#424242;"></div>
<div style="left:1447px;top:233px;width:1px;height:4px;background:#424242;"></div>
<div style="left:1449px;top:233px;width:1px;height:4px;background:#424242;"></div>
<div style="left:1451px;top:233px;width:1px;height:4px;background:#424242;"></div>
<div style="left:1453px;top:233px;width:1px;height:4px;background:#424242;"></div>
<div style="left:1455px;top:233px;width:1px;height:4px;background:#424242;"></div>
<div style="left:1457px;top:233px;width:1px;height:4px;background:#424242;"></div>
<div style="left:1459px;top:233px;width:1px;height:4px;background:#424242;"></div>
<div style="left:1432px;top:311px;width:37px;height:1px;background:#383838;"></div>
<div style="left:1441px;top:274px;width:1px;height:4px;background:#424242;"></div>
<div style="left:1443px;top:274px;width:1px;height:4px;background:#424242;"></div>
<div style="left:1445px;top:274px;width:1px;height:4px;background:#424242;"></div>
<div style="left:1447px;top:274px;width:1px;height:4px;background:#424242;"></div>
<div style="left:1449px;top:274px;width:1px;height:4px;background:#424242;"></div>
<div style="left:1451px;top:274px;width:1px;height:4px;background:#424242;"></div>
<div style="left:1453px;top:274px;width:1px;height:4px;background:#424242;"></div>
<div style="left:1455px;top:274px;width:1px;height:4px;background:#424242;"></div>
<div style="left:1457px;top:274px;width:1px;height:4px;background:#424242;"></div>
<div style="left:1459px;top:274px;width:1px;height:4px;background:#424242;"></div>
<div style="left:1432px;top:352px;width:37px;height:1px;background:#383838;"></div>
<div style="left:1441px;top:315px;width:1px;height:4px;background:#424242;"></div>
<div style="left:1443px;top:315px;width:1px;height:4px;background:#424242;"></div>
<div style="left:1445px;top:315px;width:1px;height:4px;background:#424242;"></div>
<div style="left:1447px;top:315px;width:1px;height:4px;background:#424242;"></div>
<div style="left:1449px;top:315px;width:1px;height:4px;background:#424242;"></div>
<div style="left:1451px;top:315px;width:1px;height:4px;background:#424242;"></div>
<div style="left:1453px;top:315px;width:1px;height:4px;background:#424242;"></div>
<div style="left:1455px;top:315px;width:1px;height:4px;background:#424242;"></div>
<div style="left:1457px;top:315px;width:1px;height:4px;background:#424242;"></div>
<div style="left:1459px;top:315px;width:1px;height:4px;background:#424242;"></div>
<svg style="left:1444px;top:93px;" width="17" height="19" viewBox="0 0 17 19"><rect x="1.4" y="1.4" width="4.2" height="4" fill="#4a4a4a" stroke="#d8d8d8" stroke-width="1"/><rect x="1.4" y="7.4" width="4.2" height="4" fill="#4a4a4a" stroke="#d8d8d8" stroke-width="1"/><rect x="0.9" y="13" width="5.2" height="5" fill="#d8d8d8"/><path d="M9.4 16.2 Q16.4 12.4 14.8 4.4 L12.4 5.4 Q13.8 11.4 9.4 16.2 Z" fill="#d8d8d8"/><path d="M8.6 2.8 L15.1 1.7 L14.9 5 L11.4 7.6 Z" fill="#d8d8d8"/></svg>
<div style="left:1441px;top:135px;width:2px;height:2px;background:#d8d8d8;"></div>
<div style="left:1444px;top:135.5px;width:4px;height:1px;background:#d8d8d8;"></div>
<div style="left:1441px;top:138px;width:2px;height:2px;background:#d8d8d8;"></div>
<div style="left:1444px;top:138.5px;width:4px;height:1px;background:#d8d8d8;"></div>
<div style="left:1441px;top:141px;width:2px;height:2px;background:#d8d8d8;"></div>
<div style="left:1444px;top:141.5px;width:4px;height:1px;background:#d8d8d8;"></div>
<svg style="left:1444px;top:136px;" width="18" height="17" viewBox="0 0 18 17"><path d="M16.6 0.8 Q17.4 1.6 16.6 2.6 L9.6 9.4 L7.6 7.4 L14.8 0.8 Q15.8 0.2 16.6 0.8 Z" fill="#d8d8d8"/><path d="M6.8 8.2 L8.8 10.2 Q8.6 13.4 5.6 14.4 Q2.6 15.2 0.6 14.4 Q2.8 13.2 3.2 11.2 Q4 8.6 6.8 8.2 Z" fill="#d8d8d8"/></svg>
<svg style="left:1441px;top:163px;" width="21" height="17" viewBox="0 0 21 17"><path d="M0.2 2.6 Q2.6 0.2 6 0.8 Q8.4 1.4 8.4 3 Q8.4 4.8 5.6 5.2 Q2 5.4 0.2 2.6 Z" fill="#d8d8d8"/><rect x="9" y="2.2" width="11" height="1.8" fill="#d8d8d8"/><rect x="2.6" y="10.6" width="9" height="1.8" fill="#d8d8d8"/><path d="M12.4 11.4 L18.6 7 Q20.6 11.4 19 16.4 Z" fill="#d8d8d8"/></svg>
<div style="left:1441px;top:204px;width:2px;height:2px;background:#d8d8d8;"></div>
<div style="left:1444px;top:204.5px;width:4px;height:1px;background:#d8d8d8;"></div>
<div style="left:1441px;top:207px;width:2px;height:2px;background:#d8d8d8;"></div>
<div style="left:1444px;top:207.5px;width:4px;height:1px;background:#d8d8d8;"></div>
<div style="left:1441px;top:210px;width:2px;height:2px;background:#d8d8d8;"></div>
<div style="left:1444px;top:210.5px;width:4px;height:1px;background:#d8d8d8;"></div>
<svg style="left:1447px;top:204px;" width="14" height="17" viewBox="0 0 14 17"><circle cx="7" cy="3.6" r="3.4" fill="#d8d8d8"/><path d="M5.6 6 H8.4 L8.8 9.6 H5.2 Z" fill="#d8d8d8"/><rect x="0.4" y="9.2" width="13.2" height="3.6" rx="0.8" fill="#d8d8d8"/><rect x="1" y="14.2" width="12" height="1.3" fill="#d8d8d8"/></svg>
<div class="t" style="left:1444.6px;top:243.2px;height:22px;line-height:22px;font-size:16.8px;color:#d8d8d8;transform:scaleX(1.04);transform-origin:left;">A</div>
<div style="left:1458px;top:245.5px;width:1px;height:16.3px;background:#d8d8d8;"></div>
<svg style="left:1441px;top:286px;" width="21" height="19" viewBox="0 0 21 19"><path d="M3 16.2 L17.4 2.2" stroke="#d8d8d8" stroke-width="1.6" fill="none"/><path d="M2.6 16.4 L7.4 11.6" stroke="#d8d8d8" stroke-width="3.8" stroke-linecap="round" fill="none"/><path d="M6.6 5.4 L14.6 11.6" stroke="#d8d8d8" stroke-width="1.6" fill="none"/><path d="M1 3.8 Q1.6 6.8 4.6 6.6 Q7.2 6.2 7 3 L5.2 1.2" fill="none" stroke="#d8d8d8" stroke-width="1.7"/><circle cx="17" cy="12.8" r="2.4" fill="none" stroke="#d8d8d8" stroke-width="1.3"/></svg>
<svg style="left:1445px;top:328px;" width="13" height="15" viewBox="0 0 13 15"><path d="M11.4 0.4 V14.6 H9.8 V1.8 H8.2 V14.6 H6.6 V8 Q0.6 8 0.6 4.2 Q0.6 0.4 6.2 0.4 Z" fill="#d8d8d8"/></svg>
<div style="left:1472px;top:79px;width:251px;height:339px;background:#535353;"></div>
<div style="left:1472px;top:79px;width:251px;height:28px;background:#424242;"></div>
<div style="left:1472px;top:106px;width:251px;height:1px;background:#383838;"></div>
<div style="left:1472px;top:79px;width:44px;height:28px;background:#535353;"></div>
<div style="left:1516px;top:79px;width:1px;height:27px;background:#383838;"></div>
<div style="left:1571px;top:79px;width:1px;height:27px;background:#383838;"></div>
<div class="t" style="left:1481.5px;top:84.5px;height:16px;line-height:16px;font-size:12px;color:#f4f4f4;">属性</div>
<div class="t" style="left:1525.5px;top:84.5px;height:16px;line-height:16px;font-size:12px;color:#a6a6a6;">直方图</div>
<div style="left:1707px;top:89px;width:10px;height:1px;background:#d0d0d0;"></div>
<div style="left:1707px;top:91px;width:10px;height:1px;background:#d0d0d0;"></div>
<div style="left:1707px;top:93px;width:10px;height:1px;background:#d0d0d0;"></div>
<div style="left:1707px;top:95px;width:10px;height:1px;background:#d0d0d0;"></div>
<div style="left:1482px;top:112px;width:24px;height:24px;background:#383838;border-radius:4px;border:1px solid #5c5c5c;"></div>
<div style="left:1485px;top:117px;width:17px;height:13px;background:#dcdcdc;"></div>
<div style="left:1489.4px;top:119.4px;width:8px;height:8px;background:#2c2c2c;border-radius:50%;"></div>
<div class="t" style="left:1511.5px;top:117px;height:16px;line-height:16px;font-size:12px;color:#e4e4e4;">蒙版</div>
<div style="left:1472px;top:140px;width:251px;height:1px;background:#383838;"></div>
<div style="left:1708px;top:141px;width:15px;height:252px;background:#4a4a4a;"></div>
<svg style="left:1712px;top:149px" width="8" height="4" viewBox="0 0 8 4"><path d="M0.3 3.7 L4 0.4 L7.7 3.7" fill="none" stroke="#9c9c9c" stroke-width="0.95"/></svg>
<svg style="left:1712.6px;top:380.5px" width="8" height="4" viewBox="0 0 8 4"><path d="M0.3 0.3 L4 3.6 L7.7 0.3" fill="none" stroke="#9c9c9c" stroke-width="0.95"/></svg>
<div style="left:1710px;top:158px;width:12px;height:210px;background:#6b6b6b;"></div>
<div style="left:1483px;top:148px;width:24px;height:32px;background:#808080;border:1px solid #2e2e2e;"></div>
<div style="left:1485.5px;top:153px;width:18.5px;height:22px;background:#ffffff;"></div>
<div class="t" style="left:1516.5px;top:156.5px;height:16px;line-height:16px;font-size:12px;color:#e4e4e4;">形状路径</div>
<svg style="left:1658px;top:158px;" width="16" height="14" viewBox="0 0 16 14"><rect x="0" y="0" width="13" height="10" fill="#d8d8d8"/><circle cx="6.5" cy="5" r="2.8" fill="#535353"/><rect x="7.3" y="5.3" width="8.4" height="8.4" fill="#535353"/><rect x="8" y="6" width="7" height="7" fill="#e2e2e2"/><path d="M11.5 7.5 V11.5 M9.5 9.5 H13.5" stroke="#2c2c2c" stroke-width="1"/></svg>
<div style="left:1677px;top:152px;width:24px;height:24px;background:#383838;border-radius:4px;border:1px solid #5c5c5c;"></div>
<svg style="left:1682px;top:157.2px;" width="13" height="13" viewBox="0 0 14 14"><rect x="1.6" y="1.6" width="10.8" height="10.8" fill="#d8d8d8"/><rect x="0" y="0" width="3.4" height="3.4" fill="#d8d8d8"/><rect x="10.6" y="0" width="3.4" height="3.4" fill="#d8d8d8"/><rect x="0" y="10.6" width="3.4" height="3.4" fill="#d8d8d8"/><rect x="10.6" y="10.6" width="3.4" height="3.4" fill="#d8d8d8"/><circle cx="7" cy="7" r="3.1" fill="#2c2c2c"/><rect x="1.1" y="1.1" width="1.2" height="1.2" fill="#2c2c2c"/><rect x="11.7" y="1.1" width="1.2" height="1.2" fill="#2c2c2c"/><rect x="1.1" y="11.7" width="1.2" height="1.2" fill="#2c2c2c"/><rect x="11.7" y="11.7" width="1.2" height="1.2" fill="#2c2c2c"/></svg>
<div style="left:1472px;top:195px;width:236px;height:1px;background:#383838;"></div>
<div class="t" style="left:1485.5px;top:213.5px;height:16px;line-height:16px;font-size:12px;color:#e4e4e4;">浓度:</div>
<div style="left:1640px;top:211px;width:56px;height:19px;background:#454545;border:1px solid #686868;"></div>
<div class="t" style="left:1642.6px;top:213px;height:16px;line-height:16px;font-size:12px;color:#f2f2f2;transform:scaleX(0.912);transform-origin:left center;">100%</div>
<div style="left:1487px;top:233px;width:206px;height:3px;background:#6e6e6e;"></div>
<svg style="left:1686.8px;top:231.2px;" width="12" height="10.5" viewBox="0 0 12 10.5"><path d="M6 0.3 L11.6 6.2 V8.6 Q11.6 10.2 10 10.2 H2 Q0.4 10.2 0.4 8.6 V6.2 Z" fill="#f6f6f6" stroke="#404040" stroke-width="0.5"/></svg>
<div class="t" style="left:1485.5px;top:266.5px;height:16px;line-height:16px;font-size:12px;color:#e4e4e4;">羽化:</div>
<div style="left:1640px;top:264px;width:56px;height:19px;background:#454545;border:1px solid #686868;"></div>
<div class="t" style="left:1641.5px;top:266px;height:16px;line-height:16px;font-size:12px;color:#f2f2f2;word-spacing:-1px;">0.0 像素</div>
<div style="left:1487px;top:286px;width:206px;height:3px;background:#6e6e6e;"></div>
<svg style="left:1480.2px;top:283.8px;" width="12" height="10.5" viewBox="0 0 12 10.5"><path d="M6 0.3 L11.6 6.2 V8.6 Q11.6 10.2 10 10.2 H2 Q0.4 10.2 0.4 8.6 V6.2 Z" fill="#f6f6f6" stroke="#404040" stroke-width="0.5"/></svg>
<div class="t" style="left:1481px;top:318px;height:16px;line-height:16px;font-size:12px;color:#8c8c8c;">调整:</div>
<div style="left:1583px;top:317px;width:117px;height:21px;background:#4e4e4e;border:1px solid #626262;border-radius:3px;"></div>
<div class="t" style="left:1583px;top:317px;width:117px;height:21px;line-height:24.6px;text-align:center;color:#909090;">选择并遮住 ...</div>
<div style="left:1583px;top:346px;width:117px;height:21px;background:#4e4e4e;border:1px solid #626262;border-radius:3px;"></div>
<div class="t" style="left:1583px;top:346px;width:117px;height:21px;line-height:24.6px;text-align:center;color:#909090;">颜色范围 ...</div>
<div style="left:1472px;top:393px;width:251px;height:1px;background:#383838;"></div>
<div style="left:1645.5px;top:393px;width:28.2px;height:25px;background:#3f3f3f;border:1px solid #5c5c5c;border-bottom:none;"></div>
<svg style="left:1595.7px;top:399.6px;" width="10.4" height="10.4" viewBox="0 0 10.4 10.4"><path d="M0.65 2.6 V0.65 H2.6 M4.2 0.65 H6.2 M7.8 0.65 H9.75 V2.6 M9.75 4.2 V6.2 M9.75 7.8 V9.75 H7.8 M6.2 9.75 H4.2 M2.6 9.75 H0.65 V7.8 M0.65 6.2 V4.2" fill="none" stroke="#ececec" stroke-width="1.3"/></svg>
<svg style="left:1622px;top:399.5px;" width="14.4" height="12.6" viewBox="0 0 14.4 12.6"><path d="M0.4 7 L7.2 2.2 L14 7 L7.2 12.4 Z" fill="#8a8a8a"/><path d="M7.2 0 V8 M4.2 5.4 L7.2 8.6 L10.2 5.4" fill="none" stroke="#535353" stroke-width="3"/><path d="M7.2 1 V7.8 M4.9 5.6 L7.2 8 L9.5 5.6" fill="none" stroke="#8a8a8a" stroke-width="1.3"/><path d="M7.2 1.4 Q7.2 0.5 8.8 0.5" fill="none" stroke="#8a8a8a" stroke-width="1"/></svg>
<svg style="left:1651.5px;top:400.5px;" width="13.2" height="9.2" viewBox="0 0 13.2 9.2"><path d="M0.3 4.6 Q6.6 -3.2 12.9 4.6 Q6.6 12.4 0.3 4.6 Z" fill="#f0f0f0"/><circle cx="6.6" cy="4.4" r="2.7" fill="#3f3f3f"/><circle cx="7.5" cy="3.5" r="0.85" fill="#f0f0f0"/></svg>
<svg style="left:1682px;top:400px;" width="11" height="12" viewBox="0 0 11 12"><rect x="0" y="2" width="11" height="1.1" fill="#8c8c8c"/><path d="M3.5 2 V0.5 H7.5 V2" fill="none" stroke="#8c8c8c" stroke-width="1"/><path d="M1.5 3 V11.5 H9.5 V3" fill="none" stroke="#8c8c8c" stroke-width="1"/><path d="M3.5 4.5 V10 M5.5 4.5 V10 M7.5 4.5 V10" stroke="#8c8c8c" stroke-width="1" opacity="0.85"/></svg>
<div style="left:1472px;top:418px;width:251px;height:3px;background:#383838;"></div>
<div style="left:1472px;top:421px;width:251px;height:436px;background:#535353;"></div>
<div style="left:1472px;top:421px;width:251px;height:27px;background:#424242;"></div>
<div style="left:1472px;top:448px;width:251px;height:1px;background:#383838;"></div>
<div style="left:1506px;top:421px;width:44px;height:28px;background:#535353;"></div>
<div style="left:1505px;top:421px;width:1px;height:27px;background:#383838;"></div>
<div style="left:1550px;top:421px;width:1px;height:27px;background:#383838;"></div>
<div style="left:1594px;top:421px;width:1px;height:27px;background:#383838;"></div>
<div style="left:1639px;top:421px;width:1px;height:27px;background:#383838;"></div>
<div class="t" style="left:1481px;top:427px;height:16px;line-height:16px;font-size:12px;color:#a6a6a6;">3D</div>
<div class="t" style="left:1515.5px;top:426.5px;height:16px;line-height:16px;font-size:12px;color:#f4f4f4;">图层</div>
<div class="t" style="left:1559.5px;top:426.5px;height:16px;line-height:16px;font-size:12px;color:#a6a6a6;">通道</div>
<div class="t" style="left:1604.5px;top:426.5px;height:16px;line-height:16px;font-size:12px;color:#a6a6a6;">路径</div>
<div style="left:1707px;top:431px;width:10px;height:1px;background:#d0d0d0;"></div>
<div style="left:1707px;top:433px;width:10px;height:1px;background:#d0d0d0;"></div>
<div style="left:1707px;top:435px;width:10px;height:1px;background:#d0d0d0;"></div>
<div style="left:1707px;top:437px;width:10px;height:1px;background:#d0d0d0;"></div>
<div style="left:1475.5px;top:456px;width:86.5px;height:21px;background:#454545;border:1px solid #686868;border-radius:3px;"></div>
<svg style="left:1484px;top:460px;" width="11" height="12" viewBox="0 0 11 12"><circle cx="6.2" cy="4.6" r="3.6" fill="none" stroke="#d8d8d8" stroke-width="1.4"/><path d="M3.6 7.4 L0.9 10.6" stroke="#d8d8d8" stroke-width="1.9" stroke-linecap="round"/></svg>
<div class="t" style="left:1499px;top:459.2px;height:16px;line-height:16px;font-size:12px;color:#e4e4e4;">类型</div>
<svg style="left:1552.0px;top:465.0px;" width="7" height="4" viewBox="0 0 7 4"><path d="M0.3 0.3 L3.5 3.6 L6.7 0.3" fill="none" stroke="#d0d0d0" stroke-width="1.2"/></svg>
<svg style="left:1578px;top:461px;" width="12" height="10" viewBox="0 0 12 10"><rect x="0.6" y="0.6" width="10.8" height="8.8" fill="none" stroke="#d8d8d8" stroke-width="1.2"/><path d="M2 8 L4.6 4.2 L6.4 6.6 L7.8 5 L10 8 Z" fill="#d8d8d8"/></svg>
<svg style="left:1602.5px;top:460.5px;" width="12" height="12" viewBox="0 0 12 12"><circle cx="6" cy="6" r="5" fill="none" stroke="#d8d8d8" stroke-width="1.3"/><path d="M9.6 2.4 A5 5 0 0 1 2.4 9.6 Z" fill="#d8d8d8"/></svg>
<svg style="left:1627px;top:461.5px;" width="11" height="10" viewBox="0 0 11 10"><path d="M0.2 0.2 H10.8 V3 H9.8 Q9.6 1.6 8.2 1.6 H6.9 V7.6 Q6.9 8.5 8.4 8.6 V9.4 H2.6 V8.6 Q4.1 8.5 4.1 7.6 V1.6 H2.8 Q1.4 1.6 1.2 3 H0.2 Z" fill="#d8d8d8"/></svg>
<svg style="left:1650.5px;top:460.5px;" width="12" height="12" viewBox="0 0 12 12"><rect x="1.8" y="1.8" width="8.4" height="8.4" fill="none" stroke="#d8d8d8" stroke-width="1.2"/><rect x="0.5" y="0.5" width="2.6" height="2.6" fill="#535353" stroke="#d8d8d8" stroke-width="1"/><rect x="8.9" y="0.5" width="2.6" height="2.6" fill="#535353" stroke="#d8d8d8" stroke-width="1"/><rect x="0.5" y="8.9" width="2.6" height="2.6" fill="#535353" stroke="#d8d8d8" stroke-width="1"/><rect x="8.9" y="8.9" width="2.6" height="2.6" fill="#535353" stroke="#d8d8d8" stroke-width="1"/></svg>
<svg style="left:1675.5px;top:460.5px;" width="11" height="13" viewBox="0 0 11 13"><path d="M3 0.6 H7.4 L10.2 3.4 V10.6 H6.4" fill="none" stroke="#d8d8d8" stroke-width="1.2"/><path d="M7.2 0.8 V3.6 H10" fill="none" stroke="#d8d8d8" stroke-width="1"/><path d="M3 0.6 V6" stroke="#d8d8d8" stroke-width="1.2"/><rect x="0.2" y="6.2" width="6" height="6" fill="#d8d8d8"/></svg>
<div style="left:1703px;top:458px;width:9.5px;height:18px;background:#4a4a4a;border-radius:5px;border:1px solid #3e3e3e;"></div>
<div style="left:1703.5px;top:458px;width:8.5px;height:8.5px;background:#dcdcdc;border-radius:50%;"></div>
<div style="left:1472px;top:480px;width:251px;height:1px;background:#383838;"></div>
<div style="left:1475.5px;top:484px;width:118px;height:20px;background:#454545;border:1px solid #686868;border-radius:3px;"></div>
<div class="t" style="left:1485px;top:487px;height:16px;line-height:16px;font-size:12px;color:#e4e4e4;">正常</div>
<svg style="left:1583.0px;top:492.0px;" width="7" height="4" viewBox="0 0 7 4"><path d="M0.3 0.3 L3.5 3.6 L6.7 0.3" fill="none" stroke="#d0d0d0" stroke-width="1.2"/></svg>
<div class="t" style="left:1602px;top:486.7px;height:16px;line-height:16px;font-size:12px;color:#e4e4e4;">不透明度:</div>
<div style="left:1658px;top:484px;width:55px;height:20px;background:#454545;border:1px solid #686868;border-radius:3px;"></div>
<div style="left:1696px;top:485px;width:1px;height:18px;background:#686868;"></div>
<div class="t" style="left:1660.8px;top:486.5px;height:16px;line-height:16px;font-size:12px;color:#f2f2f2;transform:scaleX(0.912);transform-origin:left center;">100%</div>
<svg style="left:1701.0px;top:492.0px;" width="7" height="4" viewBox="0 0 7 4"><path d="M0.3 0.3 L3.5 3.6 L6.7 0.3" fill="none" stroke="#d0d0d0" stroke-width="1.2"/></svg>
<div style="left:1472px;top:507px;width:251px;height:1px;background:#383838;"></div>
<div class="t" style="left:1479px;top:512.5px;height:16px;line-height:16px;font-size:12px;color:#e4e4e4;">锁定:</div>
<svg style="left:1516px;top:515px;" width="11" height="11" viewBox="0 0 11 11"><rect x="0" y="0" width="11" height="11" fill="#8e8e8e"/><rect x="1.2" y="1.2" width="2.8" height="2.8" fill="#484848"/><rect x="7" y="1.2" width="2.8" height="2.8" fill="#484848"/><rect x="4.1" y="4.1" width="2.8" height="2.8" fill="#484848"/><rect x="1.2" y="7" width="2.8" height="2.8" fill="#484848"/><rect x="7" y="7" width="2.8" height="2.8" fill="#484848"/></svg>
<svg style="left:1537.5px;top:514px;" width="13" height="13" viewBox="0 0 13 13"><path d="M12.2 0.3 Q13.2 1 12.4 2.2 L7.8 8.6 L5.4 6.6 L10.8 0.8 Q11.5 0 12.2 0.3 Z" fill="#8e8e8e"/><path d="M4.9 7.3 L6.7 8.9 Q6.8 11.4 4.4 12 Q2.2 12.5 0.4 11.9 Q2 11 2.2 9.6 Q2.6 7.6 4.9 7.3 Z" fill="#8e8e8e"/></svg>
<svg style="left:1559px;top:514px;" width="13" height="13" viewBox="0 0 13 13"><path d="M6.5 0 L9 2.9 H7.2 V5.8 H10.1 V4 L13 6.5 L10.1 9 V7.2 H7.2 V10.1 H9 L6.5 13 L4 10.1 H5.8 V7.2 H2.9 V9 L0 6.5 L2.9 4 V5.8 H5.8 V2.9 H4 Z" fill="#d8d8d8"/></svg>
<svg style="left:1581px;top:514px;" width="15" height="14" viewBox="0 0 15 14"><path d="M3.5 3.5 H9.3 L12.5 6.7 V11.5 H3.5 Z" fill="none" stroke="#d8d8d8" stroke-width="1.1"/><path d="M9.3 3.5 V6.7 H12.5" fill="none" stroke="#d8d8d8" stroke-width="0.9"/><path d="M3.5 0.6 V2.4 M0.6 3.5 H2.4 M0.6 11.5 H2.4 M3.5 12.6 V14 M12.5 12.6 V14 M13.6 11.5 H15 M13.6 3.5 H15 M12.5 0.6 V2.4" stroke="#d8d8d8" stroke-width="1"/></svg>
<svg style="left:1605px;top:515px;" width="10.4" height="12" viewBox="0 0 10.4 12"><path d="M2.7 5.4 V3.6 Q2.7 0.8 5.2 0.8 Q7.7 0.8 7.7 3.6 V5.4" fill="none" stroke="#d8d8d8" stroke-width="1.4"/><rect x="0.2" y="5" width="10" height="7" rx="0.6" fill="#d8d8d8"/><circle cx="5.2" cy="8.4" r="1.1" fill="#3a3a3a"/></svg>
<div class="t" style="left:1626.5px;top:513.2px;height:16px;line-height:16px;font-size:12px;color:#e4e4e4;">填充:</div>
<div style="left:1658px;top:511px;width:55px;height:20px;background:#454545;border:1px solid #686868;border-radius:3px;"></div>
<div style="left:1696px;top:512px;width:1px;height:18px;background:#686868;"></div>
<div class="t" style="left:1660.8px;top:513px;height:16px;line-height:16px;font-size:12px;color:#f2f2f2;transform:scaleX(0.912);transform-origin:left center;">100%</div>
<svg style="left:1701.0px;top:519.0px;" width="7" height="4" viewBox="0 0 7 4"><path d="M0.3 0.3 L3.5 3.6 L6.7 0.3" fill="none" stroke="#d0d0d0" stroke-width="1.2"/></svg>
<div style="left:1472px;top:535px;width:236px;height:1px;background:#474747;"></div>
<div style="left:1708px;top:535px;width:15px;height:297px;background:#4a4a4a;"></div>
<div style="left:1472px;top:653px;width:236px;height:179px;background:#4d4d4d;"></div>
<div style="left:1503px;top:536px;width:205px;height:38px;background:#6b6b6b;"></div>
<div style="left:1472px;top:574px;width:236px;height:1px;background:#474747;"></div>
<div style="left:1502px;top:536px;width:1px;height:38px;background:#474747;"></div>
<svg style="left:1480.8px;top:550.8px;" width="13.2" height="9.2" viewBox="0 0 13.2 9.2"><path d="M0.3 4.6 Q6.6 -3.2 12.9 4.6 Q6.6 12.4 0.3 4.6 Z" fill="#dedede"/><circle cx="6.6" cy="4.4" r="2.7" fill="#535353"/><circle cx="7.5" cy="3.5" r="0.85" fill="#dedede"/></svg>
<div style="left:1472px;top:613px;width:236px;height:1px;background:#474747;"></div>
<div style="left:1502px;top:575px;width:1px;height:38px;background:#474747;"></div>
<svg style="left:1480.8px;top:589.8px;" width="13.2" height="9.2" viewBox="0 0 13.2 9.2"><path d="M0.3 4.6 Q6.6 -3.2 12.9 4.6 Q6.6 12.4 0.3 4.6 Z" fill="#dedede"/><circle cx="6.6" cy="4.4" r="2.7" fill="#535353"/><circle cx="7.5" cy="3.5" r="0.85" fill="#dedede"/></svg>
<div style="left:1472px;top:652px;width:236px;height:1px;background:#474747;"></div>
<div style="left:1502px;top:614px;width:1px;height:38px;background:#474747;"></div>
<svg style="left:1480.8px;top:628.8px;" width="13.2" height="9.2" viewBox="0 0 13.2 9.2"><path d="M0.3 4.6 Q6.6 -3.2 12.9 4.6 Q6.6 12.4 0.3 4.6 Z" fill="#dedede"/><circle cx="6.6" cy="4.4" r="2.7" fill="#535353"/><circle cx="7.5" cy="3.5" r="0.85" fill="#dedede"/></svg>
<svg style="left:1504px;top:537px;" width="28" height="36" viewBox="0 0 28 36"><path d="M0.6 9 V0.6 H7 M21 0.6 H27.4 V9 M27.4 27 V35.4 H21 M7 35.4 H0.6 V27" fill="none" stroke="#ffffff" stroke-width="1.2"/><rect x="2.5" y="2.5" width="23.5" height="31.5" fill="#ffffff" stroke="#1e1e1e" stroke-width="1.2"/><rect x="6.5" y="4.6" width="2.6" height="2.4" fill="#c8c8c8"/><rect x="11.5" y="4.6" width="2.6" height="2.4" fill="#c8c8c8"/><rect x="16.5" y="4.6" width="2.6" height="2.4" fill="#c8c8c8"/><rect x="21.5" y="4.6" width="2.6" height="2.4" fill="#c8c8c8"/><rect x="3.6" y="9" width="2.2" height="2.6" fill="#c8c8c8"/><rect x="3.6" y="14" width="2.2" height="2.6" fill="#c8c8c8"/><rect x="3.6" y="19" width="2.2" height="2.6" fill="#c8c8c8"/><rect x="3.6" y="24" width="2.2" height="2.6" fill="#c8c8c8"/><rect x="3.6" y="29" width="2.2" height="2.6" fill="#c8c8c8"/><rect x="22.6" y="8" width="2.2" height="2.6" fill="#c8c8c8"/><rect x="22.6" y="13" width="2.2" height="2.6" fill="#c8c8c8"/><rect x="7" y="30.6" width="2.6" height="2.2" fill="#c8c8c8"/><path d="M12.4 34.6 V20.4 H26.6 V34.6 Z" fill="#6b6b6b"/><path d="M12.4 34 V20.4 H26" fill="none" stroke="#1e1e1e" stroke-width="1.2"/><rect x="15.6" y="23.6" width="8.6" height="8.6" fill="none" stroke="#e6e6e6" stroke-width="1.1"/><rect x="14.4" y="22.4" width="2.4" height="2.4" fill="#6b6b6b" stroke="#e6e6e6" stroke-width="0.9"/><rect x="23" y="22.4" width="2.4" height="2.4" fill="#6b6b6b" stroke="#e6e6e6" stroke-width="0.9"/><rect x="14.4" y="31" width="2.4" height="2.4" fill="#6b6b6b" stroke="#e6e6e6" stroke-width="0.9"/><rect x="23" y="31" width="2.4" height="2.4" fill="#6b6b6b" stroke="#e6e6e6" stroke-width="0.9"/></svg>
<div class="t" style="left:1540px;top:549px;height:16px;line-height:16px;font-size:12px;color:#f2f2f2;">形状 1</div>
<div style="left:1506px;top:578px;width:32px;height:32px;background:#dcdcdc;border:1px solid #1a1a1a;"></div>
<div style="left:1507px;top:601px;width:30px;height:1px;background:#1a1a1a;"></div>
<div style="left:1507px;top:602px;width:30px;height:7px;background:#b8b8b8;"></div>
<div style="left:1509px;top:603.5px;width:26px;height:1px;background:#1a1a1a;"></div>
<svg style="left:1519.5px;top:605px;" width="5" height="3" viewBox="0 0 5 3"><path d="M2.5 0 L5 3 H0 Z" fill="#1a1a1a"/></svg>
<svg style="left:1541px;top:586px;" width="9" height="15" viewBox="0 0 9 15"><rect x="1.4" y="0.8" width="6" height="7.2" rx="3" fill="none" stroke="#c4c4c4" stroke-width="1.5"/><rect x="1.4" y="6.8" width="6" height="7.2" rx="3" fill="none" stroke="#c4c4c4" stroke-width="1.5"/><rect x="3.7" y="4.4" width="1.5" height="6" fill="#e0e0e0"/></svg>
<div style="left:1553px;top:578px;width:24px;height:32px;background:#ffffff;border:1px solid #1a1a1a;"></div>
<div class="t" style="left:1587px;top:587.5px;height:16px;line-height:16px;font-size:12px;color:#e4e4e4;">颜色填充 2</div>
<div style="left:1506px;top:617px;width:24px;height:32px;background:#ffffff;border:1px solid #1a1a1a;"></div>
<div class="t" style="left:1540px;top:627px;height:16px;line-height:16px;font-size:12px;color:#e4e4e4;">背景</div>
<svg style="left:1681px;top:627px;" width="10" height="12" viewBox="0 0 10 12"><path d="M2.6 5 V3.4 Q2.6 0.7 5 0.7 Q7.4 0.7 7.4 3.4 V5" fill="none" stroke="#d8d8d8" stroke-width="1.1"/><rect x="0.6" y="4.9" width="8.8" height="6.5" fill="none" stroke="#d8d8d8" stroke-width="1.1"/><rect x="4.3" y="7.4" width="1.5" height="1.5" fill="#d8d8d8"/></svg>
<div style="left:1472px;top:832px;width:251px;height:1px;background:#383838;"></div>
<svg style="left:1520px;top:839.5px;" width="15" height="9" viewBox="0 0 15 9"><rect x="0.7" y="1.2" width="7.4" height="6.6" rx="3.3" fill="none" stroke="#8e8e8e" stroke-width="1.3"/><rect x="6.9" y="1.2" width="7.4" height="6.6" rx="3.3" fill="none" stroke="#8e8e8e" stroke-width="1.3"/><rect x="3.8" y="3.8" width="7.4" height="1.4" fill="#8e8e8e"/></svg>
<div class="t" style="left:1548px;top:834px;height:20px;line-height:20px;font-size:15.5px;font-style:italic;color:#d8d8d8;letter-spacing:-0.6px;">fx</div>
<svg style="left:1561.5px;top:852.8px;" width="4" height="2.5" viewBox="0 0 4 2.5"><path d="M0 0 H4 L2 2.5 Z" fill="#e0e0e0"/></svg>
<div style="left:1574px;top:839px;width:13px;height:10px;background:#d8d8d8;"></div>
<div style="left:1577.6px;top:841px;width:6px;height:6px;background:#3a3a3a;border-radius:50%;"></div>
<svg style="left:1602.5px;top:838.5px;" width="12" height="12" viewBox="0 0 12 12"><circle cx="6" cy="6" r="5" fill="none" stroke="#d8d8d8" stroke-width="1.3"/><path d="M9.6 2.4 A5 5 0 0 1 2.4 9.6 Z" fill="#d8d8d8"/></svg>
<svg style="left:1615.5px;top:852.8px;" width="4" height="2.5" viewBox="0 0 4 2.5"><path d="M0 0 H4 L2 2.5 Z" fill="#e0e0e0"/></svg>
<svg style="left:1628.5px;top:838.5px;" width="13" height="11" viewBox="0 0 13 11"><path d="M0 0.4 H5 L5.8 1.6 H12.4 V10.4 H0 Z" fill="#d8d8d8"/><path d="M0 1.9 H12" stroke="#535353" stroke-width="0.6"/></svg>
<svg style="left:1656px;top:839.5px;" width="11" height="11" viewBox="0 0 11 11"><path d="M0.6 0.6 H10.2 V10.2 H4.4 L0.6 6.4 Z" fill="none" stroke="#d8d8d8" stroke-width="1.2"/><path d="M4.6 10 V6.2 H0.8" fill="none" stroke="#d8d8d8" stroke-width="1"/></svg>
<svg style="left:1683px;top:839px;" width="11" height="12" viewBox="0 0 11 12"><rect x="0" y="2" width="11" height="1.1" fill="#d8d8d8"/><path d="M3.5 2 V0.5 H7.5 V2" fill="none" stroke="#d8d8d8" stroke-width="1"/><path d="M1.5 3 V11.5 H9.5 V3" fill="none" stroke="#d8d8d8" stroke-width="1"/><path d="M3.5 4.5 V10 M5.5 4.5 V10 M7.5 4.5 V10" stroke="#d8d8d8" stroke-width="1" opacity="0.85"/></svg>
</body></html>
